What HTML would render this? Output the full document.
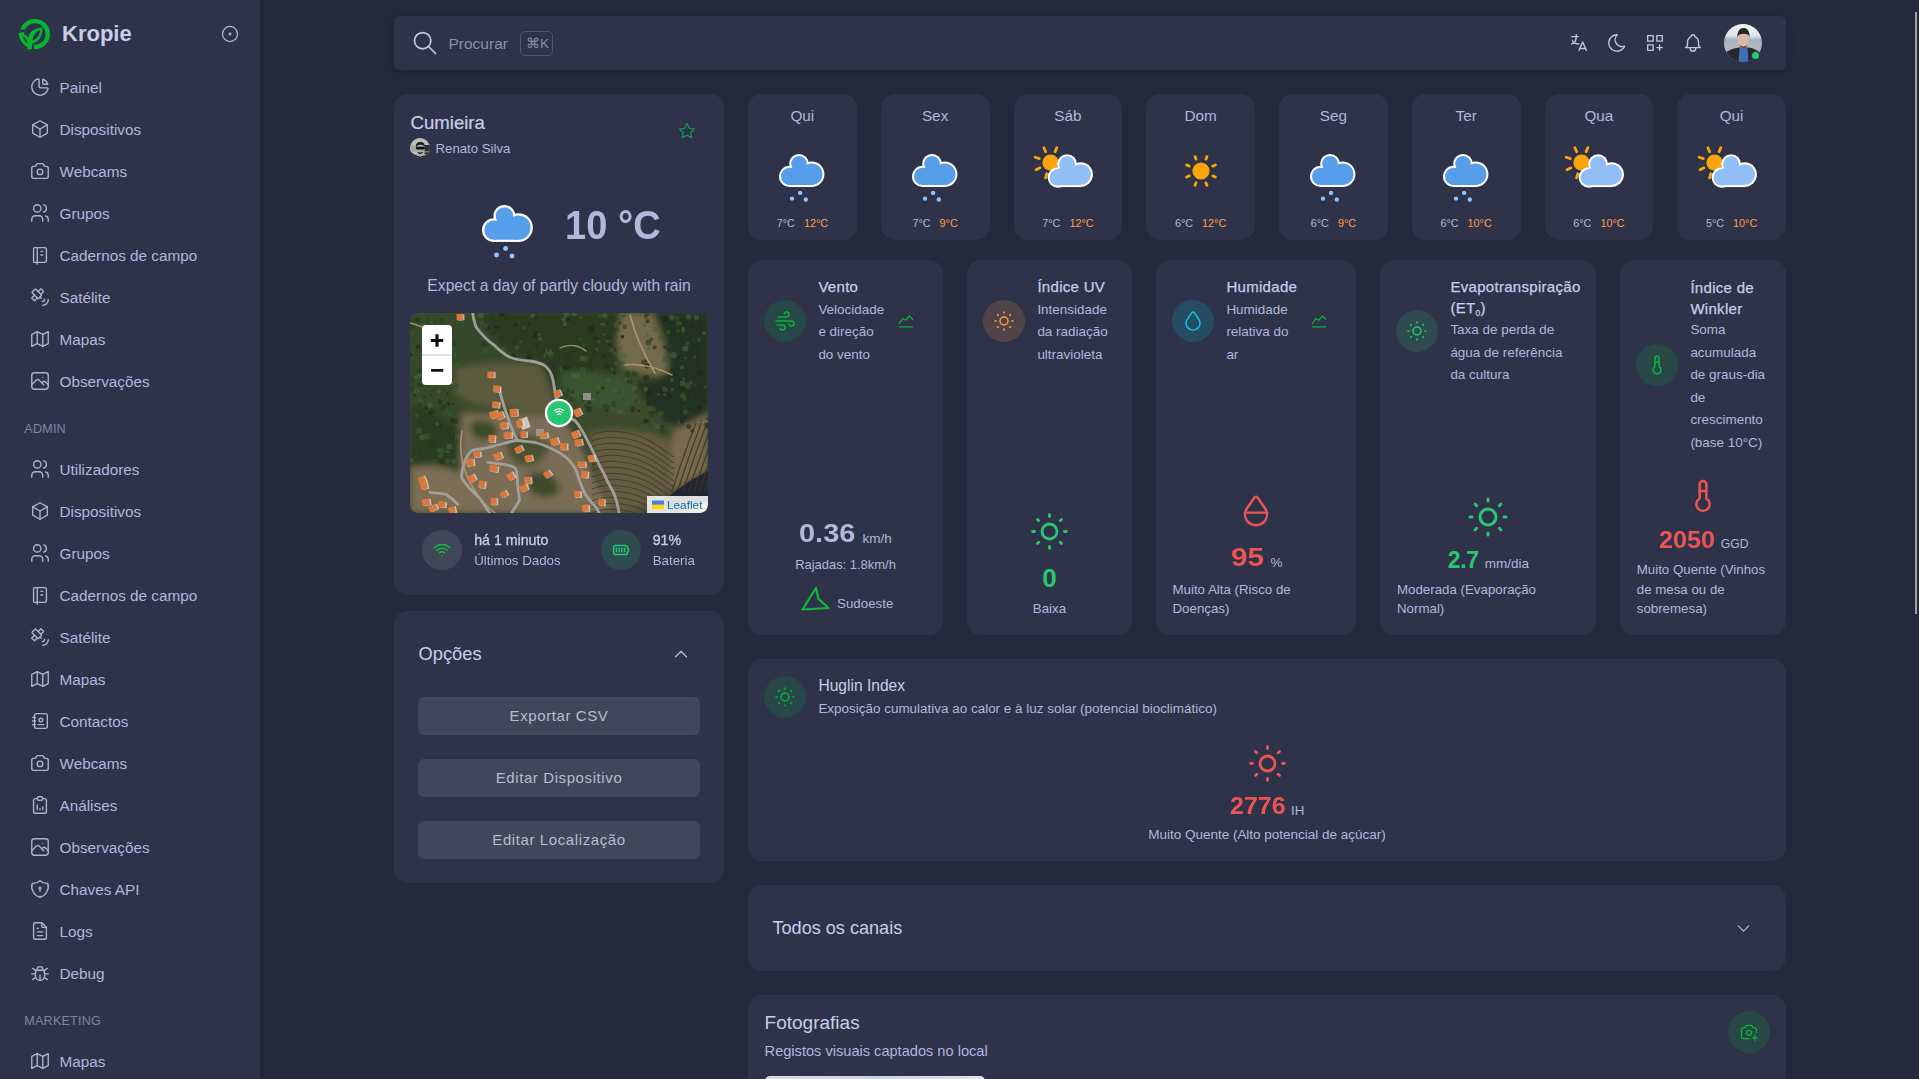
<!DOCTYPE html>
<html><head><meta charset="utf-8"><title>Kropie</title>
<style>
html,body{margin:0;padding:0;width:1919px;height:1079px;overflow:hidden;background:#25293c;font-family:"Liberation Sans",sans-serif;}
.t{position:absolute;line-height:1;white-space:nowrap;}
.b{position:absolute;}
.ic{position:absolute;overflow:visible;}
</style></head><body>
<div class="b" style="left:0;top:0;width:260px;height:1079px;background:#2f3349;box-shadow:0 0 8px rgba(15,20,34,.35)"></div>
<svg class="ic" style="left:0px;top:0px;width:60px;height:60px" viewBox="0 0 60 60">
<circle cx="34.9" cy="34" r="12.9" fill="none" stroke="#05b531" stroke-width="4.4"/>
<rect x="18" y="29.6" width="8" height="2.8" fill="#2f3349"/>
<rect x="31.8" y="44" width="2" height="8" fill="#2f3349"/>
<path d="M18.5 33.2 C24.5 33.2 29.8 36.5 30.2 44 L30.2 49.2 L27.6 49.2 L27.6 45.8 C23 45 19 40 18.5 33.2 Z" fill="#05b531"/>
<path d="M22.8 36.2 C25.5 37.5 27 39.8 27.4 43.2 C25 42 23.4 39.6 22.8 36.2 Z" fill="#2f3349"/>
<path d="M27.8 49.2 L27.8 42 C27.8 32.5 33.5 28 42.5 27.6 C42.8 37.5 37.5 42.8 32 43.8 L32 49.2 Z" fill="#05b531"/>
<path d="M32.3 40.6 C33.6 34.6 36.2 31.6 40.2 30.2 C39.4 35.6 36.8 39 32.3 40.6 Z" fill="#2f3349"/>
</svg>
<div class="t" style="left:62.00px;top:23.18px;font-size:22px;color:#c9cdea;font-weight:700;">Kropie</div>
<svg class="ic" style="left:220px;top:24px;width:20px;height:20px" viewBox="0 0 24 24" fill="none" stroke="#aeb2cc" stroke-width="1.5" stroke-linecap="round" stroke-linejoin="round" ><path d="M12 12m-9 0a9 9 0 1 0 18 0a9 9 0 1 0 -18 0"/><path d="M12 12m-1 0a1 1 0 1 0 2 0a1 1 0 1 0 -2 0"/></svg>
<svg class="ic" style="left:29px;top:75.6px;width:22px;height:22px" viewBox="0 0 24 24" fill="none" stroke="#aeb2cc" stroke-width="1.5" stroke-linecap="round" stroke-linejoin="round" ><path d="M10 3.2a9 9 0 1 0 10.8 10.8a1 1 0 0 0 -1 -1h-6.8a2 2 0 0 1 -2 -2v-7a.9 .9 0 0 0 -1 -.8"/><path d="M15 3.5a9 9 0 0 1 5.5 5.5h-4.5a1 1 0 0 1 -1 -1v-4.5"/></svg>
<div class="t" style="left:59.50px;top:80.15px;font-size:15.3px;color:#b0b7dc;font-weight:400;">Painel</div>
<svg class="ic" style="left:29px;top:117.6px;width:22px;height:22px" viewBox="0 0 24 24" fill="none" stroke="#aeb2cc" stroke-width="1.5" stroke-linecap="round" stroke-linejoin="round" ><path d="M12 3l8 4.5l0 9l-8 4.5l-8 -4.5l0 -9l8 -4.5"/><path d="M12 12l8 -4.5"/><path d="M12 12l0 9"/><path d="M12 12l-8 -4.5"/></svg>
<div class="t" style="left:59.50px;top:122.15px;font-size:15.3px;color:#b0b7dc;font-weight:400;">Dispositivos</div>
<svg class="ic" style="left:29px;top:159.6px;width:22px;height:22px" viewBox="0 0 24 24" fill="none" stroke="#aeb2cc" stroke-width="1.5" stroke-linecap="round" stroke-linejoin="round" ><path d="M5 7h1a2 2 0 0 0 2 -2a1 1 0 0 1 1 -1h6a1 1 0 0 1 1 1a2 2 0 0 0 2 2h1a2 2 0 0 1 2 2v9a2 2 0 0 1 -2 2h-14a2 2 0 0 1 -2 -2v-9a2 2 0 0 1 2 -2"/><path d="M9 13a3 3 0 1 0 6 0a3 3 0 0 0 -6 0"/></svg>
<div class="t" style="left:59.50px;top:164.15px;font-size:15.3px;color:#b0b7dc;font-weight:400;">Webcams</div>
<svg class="ic" style="left:29px;top:201.6px;width:22px;height:22px" viewBox="0 0 24 24" fill="none" stroke="#aeb2cc" stroke-width="1.5" stroke-linecap="round" stroke-linejoin="round" ><path d="M9 7m-4 0a4 4 0 1 0 8 0a4 4 0 1 0 -8 0"/><path d="M3 21v-2a4 4 0 0 1 4 -4h4a4 4 0 0 1 4 4v2"/><path d="M16 3.13a4 4 0 0 1 0 7.75"/><path d="M21 21v-2a4 4 0 0 0 -3 -3.85"/></svg>
<div class="t" style="left:59.50px;top:206.15px;font-size:15.3px;color:#b0b7dc;font-weight:400;">Grupos</div>
<svg class="ic" style="left:29px;top:243.60000000000002px;width:22px;height:22px" viewBox="0 0 24 24" fill="none" stroke="#aeb2cc" stroke-width="1.5" stroke-linecap="round" stroke-linejoin="round" ><path d="M6 4h11a2 2 0 0 1 2 2v12a2 2 0 0 1 -2 2h-11a1 1 0 0 1 -1 -1v-14a1 1 0 0 1 1 -1m3 0v18"/><path d="M13 8l2 0"/><path d="M13 12l2 0"/></svg>
<div class="t" style="left:59.50px;top:248.15px;font-size:15.3px;color:#b0b7dc;font-weight:400;">Cadernos de campo</div>
<svg class="ic" style="left:29px;top:285.6px;width:22px;height:22px" viewBox="0 0 24 24" fill="none" stroke="#aeb2cc" stroke-width="1.5" stroke-linecap="round" stroke-linejoin="round" ><path d="M3.707 6.293l2.586 -2.586a1 1 0 0 1 1.414 0l5.586 5.586a1 1 0 0 1 0 1.414l-2.586 2.586a1 1 0 0 1 -1.414 0l-5.586 -5.586a1 1 0 0 1 0 -1.414z"/><path d="M6 10l-3 3l3 3l3 -3"/><path d="M10 6l3 -3l3 3l-3 3"/><path d="M12 12l1.5 1.5"/><path d="M14.5 17a2.5 2.5 0 0 0 2.5 -2.5"/><path d="M15 21a6 6 0 0 0 6 -6"/></svg>
<div class="t" style="left:59.50px;top:290.15px;font-size:15.3px;color:#b0b7dc;font-weight:400;">Satélite</div>
<svg class="ic" style="left:29px;top:327.6px;width:22px;height:22px" viewBox="0 0 24 24" fill="none" stroke="#aeb2cc" stroke-width="1.5" stroke-linecap="round" stroke-linejoin="round" ><path d="M3 7l6 -3l6 3l6 -3v13l-6 3l-6 -3l-6 3v-13"/><path d="M9 4v13"/><path d="M15 7v13"/></svg>
<div class="t" style="left:59.50px;top:332.15px;font-size:15.3px;color:#b0b7dc;font-weight:400;">Mapas</div>
<svg class="ic" style="left:29px;top:369.6px;width:22px;height:22px" viewBox="0 0 24 24" fill="none" stroke="#aeb2cc" stroke-width="1.5" stroke-linecap="round" stroke-linejoin="round" ><path d="M15 8h.01"/><path d="M3 6a3 3 0 0 1 3 -3h12a3 3 0 0 1 3 3v12a3 3 0 0 1 -3 3h-12a3 3 0 0 1 -3 -3v-12z"/><path d="M3 16l5 -5c.928 -.893 2.072 -.893 3 0l5 5"/><path d="M14 14l1 -1c.928 -.893 2.072 -.893 3 0l3 3"/></svg>
<div class="t" style="left:59.50px;top:374.15px;font-size:15.3px;color:#b0b7dc;font-weight:400;">Observações</div>
<div class="t" style="left:24.30px;top:422.73px;font-size:12.6px;color:#7f84a3;font-weight:400;letter-spacing:.2px">ADMIN</div>
<svg class="ic" style="left:29px;top:458.1px;width:22px;height:22px" viewBox="0 0 24 24" fill="none" stroke="#aeb2cc" stroke-width="1.5" stroke-linecap="round" stroke-linejoin="round" ><path d="M9 7m-4 0a4 4 0 1 0 8 0a4 4 0 1 0 -8 0"/><path d="M3 21v-2a4 4 0 0 1 4 -4h4a4 4 0 0 1 4 4v2"/><path d="M16 3.13a4 4 0 0 1 0 7.75"/><path d="M21 21v-2a4 4 0 0 0 -3 -3.85"/></svg>
<div class="t" style="left:59.50px;top:461.65px;font-size:15.3px;color:#b0b7dc;font-weight:400;">Utilizadores</div>
<svg class="ic" style="left:29px;top:500.1px;width:22px;height:22px" viewBox="0 0 24 24" fill="none" stroke="#aeb2cc" stroke-width="1.5" stroke-linecap="round" stroke-linejoin="round" ><path d="M12 3l8 4.5l0 9l-8 4.5l-8 -4.5l0 -9l8 -4.5"/><path d="M12 12l8 -4.5"/><path d="M12 12l0 9"/><path d="M12 12l-8 -4.5"/></svg>
<div class="t" style="left:59.50px;top:503.65px;font-size:15.3px;color:#b0b7dc;font-weight:400;">Dispositivos</div>
<svg class="ic" style="left:29px;top:542.1px;width:22px;height:22px" viewBox="0 0 24 24" fill="none" stroke="#aeb2cc" stroke-width="1.5" stroke-linecap="round" stroke-linejoin="round" ><path d="M9 7m-4 0a4 4 0 1 0 8 0a4 4 0 1 0 -8 0"/><path d="M3 21v-2a4 4 0 0 1 4 -4h4a4 4 0 0 1 4 4v2"/><path d="M16 3.13a4 4 0 0 1 0 7.75"/><path d="M21 21v-2a4 4 0 0 0 -3 -3.85"/></svg>
<div class="t" style="left:59.50px;top:545.65px;font-size:15.3px;color:#b0b7dc;font-weight:400;">Grupos</div>
<svg class="ic" style="left:29px;top:584.1px;width:22px;height:22px" viewBox="0 0 24 24" fill="none" stroke="#aeb2cc" stroke-width="1.5" stroke-linecap="round" stroke-linejoin="round" ><path d="M6 4h11a2 2 0 0 1 2 2v12a2 2 0 0 1 -2 2h-11a1 1 0 0 1 -1 -1v-14a1 1 0 0 1 1 -1m3 0v18"/><path d="M13 8l2 0"/><path d="M13 12l2 0"/></svg>
<div class="t" style="left:59.50px;top:587.65px;font-size:15.3px;color:#b0b7dc;font-weight:400;">Cadernos de campo</div>
<svg class="ic" style="left:29px;top:626.1px;width:22px;height:22px" viewBox="0 0 24 24" fill="none" stroke="#aeb2cc" stroke-width="1.5" stroke-linecap="round" stroke-linejoin="round" ><path d="M3.707 6.293l2.586 -2.586a1 1 0 0 1 1.414 0l5.586 5.586a1 1 0 0 1 0 1.414l-2.586 2.586a1 1 0 0 1 -1.414 0l-5.586 -5.586a1 1 0 0 1 0 -1.414z"/><path d="M6 10l-3 3l3 3l3 -3"/><path d="M10 6l3 -3l3 3l-3 3"/><path d="M12 12l1.5 1.5"/><path d="M14.5 17a2.5 2.5 0 0 0 2.5 -2.5"/><path d="M15 21a6 6 0 0 0 6 -6"/></svg>
<div class="t" style="left:59.50px;top:629.65px;font-size:15.3px;color:#b0b7dc;font-weight:400;">Satélite</div>
<svg class="ic" style="left:29px;top:668.1px;width:22px;height:22px" viewBox="0 0 24 24" fill="none" stroke="#aeb2cc" stroke-width="1.5" stroke-linecap="round" stroke-linejoin="round" ><path d="M3 7l6 -3l6 3l6 -3v13l-6 3l-6 -3l-6 3v-13"/><path d="M9 4v13"/><path d="M15 7v13"/></svg>
<div class="t" style="left:59.50px;top:671.65px;font-size:15.3px;color:#b0b7dc;font-weight:400;">Mapas</div>
<svg class="ic" style="left:29px;top:710.1px;width:22px;height:22px" viewBox="0 0 24 24" fill="none" stroke="#aeb2cc" stroke-width="1.5" stroke-linecap="round" stroke-linejoin="round" ><path d="M20 6v12a2 2 0 0 1 -2 2h-10a2 2 0 0 1 -2 -2v-12a2 2 0 0 1 2 -2h10a2 2 0 0 1 2 2z"/><path d="M10 16h6"/><path d="M13 11m-2 0a2 2 0 1 0 4 0a2 2 0 1 0 -4 0"/><path d="M4 8h3"/><path d="M4 12h3"/><path d="M4 16h3"/></svg>
<div class="t" style="left:59.50px;top:713.65px;font-size:15.3px;color:#b0b7dc;font-weight:400;">Contactos</div>
<svg class="ic" style="left:29px;top:752.1px;width:22px;height:22px" viewBox="0 0 24 24" fill="none" stroke="#aeb2cc" stroke-width="1.5" stroke-linecap="round" stroke-linejoin="round" ><path d="M5 7h1a2 2 0 0 0 2 -2a1 1 0 0 1 1 -1h6a1 1 0 0 1 1 1a2 2 0 0 0 2 2h1a2 2 0 0 1 2 2v9a2 2 0 0 1 -2 2h-14a2 2 0 0 1 -2 -2v-9a2 2 0 0 1 2 -2"/><path d="M9 13a3 3 0 1 0 6 0a3 3 0 0 0 -6 0"/></svg>
<div class="t" style="left:59.50px;top:755.65px;font-size:15.3px;color:#b0b7dc;font-weight:400;">Webcams</div>
<svg class="ic" style="left:29px;top:794.1px;width:22px;height:22px" viewBox="0 0 24 24" fill="none" stroke="#aeb2cc" stroke-width="1.5" stroke-linecap="round" stroke-linejoin="round" ><path d="M9 5h-2a2 2 0 0 0 -2 2v12a2 2 0 0 0 2 2h10a2 2 0 0 0 2 -2v-12a2 2 0 0 0 -2 -2h-2"/><path d="M9 3m0 2a2 2 0 0 1 2 -2h2a2 2 0 0 1 2 2v0a2 2 0 0 1 -2 2h-2a2 2 0 0 1 -2 -2z"/><path d="M9 17v-5"/><path d="M12 17v-1"/><path d="M15 17v-3"/></svg>
<div class="t" style="left:59.50px;top:797.65px;font-size:15.3px;color:#b0b7dc;font-weight:400;">Análises</div>
<svg class="ic" style="left:29px;top:836.1px;width:22px;height:22px" viewBox="0 0 24 24" fill="none" stroke="#aeb2cc" stroke-width="1.5" stroke-linecap="round" stroke-linejoin="round" ><path d="M15 8h.01"/><path d="M3 6a3 3 0 0 1 3 -3h12a3 3 0 0 1 3 3v12a3 3 0 0 1 -3 3h-12a3 3 0 0 1 -3 -3v-12z"/><path d="M3 16l5 -5c.928 -.893 2.072 -.893 3 0l5 5"/><path d="M14 14l1 -1c.928 -.893 2.072 -.893 3 0l3 3"/></svg>
<div class="t" style="left:59.50px;top:839.65px;font-size:15.3px;color:#b0b7dc;font-weight:400;">Observações</div>
<svg class="ic" style="left:29px;top:878.1px;width:22px;height:22px" viewBox="0 0 24 24" fill="none" stroke="#aeb2cc" stroke-width="1.5" stroke-linecap="round" stroke-linejoin="round" ><path d="M12 3a12 12 0 0 0 8.5 3a12 12 0 0 1 -8.5 15a12 12 0 0 1 -8.5 -15a12 12 0 0 0 8.5 -3"/><path d="M12 11m-1 0a1 1 0 1 0 2 0a1 1 0 1 0 -2 0"/><path d="M12 12l0 2.5"/></svg>
<div class="t" style="left:59.50px;top:881.65px;font-size:15.3px;color:#b0b7dc;font-weight:400;">Chaves API</div>
<svg class="ic" style="left:29px;top:920.1px;width:22px;height:22px" viewBox="0 0 24 24" fill="none" stroke="#aeb2cc" stroke-width="1.5" stroke-linecap="round" stroke-linejoin="round" ><path d="M14 3v4a1 1 0 0 0 1 1h4"/><path d="M17 21h-10a2 2 0 0 1 -2 -2v-14a2 2 0 0 1 2 -2h7l5 5v11a2 2 0 0 1 -2 2z"/><path d="M9 9l1 0"/><path d="M9 13l6 0"/><path d="M9 17l6 0"/></svg>
<div class="t" style="left:59.50px;top:923.65px;font-size:15.3px;color:#b0b7dc;font-weight:400;">Logs</div>
<svg class="ic" style="left:29px;top:962.1px;width:22px;height:22px" viewBox="0 0 24 24" fill="none" stroke="#aeb2cc" stroke-width="1.5" stroke-linecap="round" stroke-linejoin="round" ><path d="M9 9v-1a3 3 0 0 1 6 0v1"/><path d="M8 9h8a6 6 0 0 1 1 3v3a5 5 0 0 1 -10 0v-3a6 6 0 0 1 1 -3"/><path d="M3 13l4 0"/><path d="M17 13l4 0"/><path d="M12 20l0 -6"/><path d="M4 19l3.35 -2"/><path d="M20 19l-3.35 -2"/><path d="M4 7l3.75 2.4"/><path d="M20 7l-3.75 2.4"/></svg>
<div class="t" style="left:59.50px;top:965.65px;font-size:15.3px;color:#b0b7dc;font-weight:400;">Debug</div>
<div class="t" style="left:24.30px;top:1014.93px;font-size:12.6px;color:#7f84a3;font-weight:400;letter-spacing:.2px">MARKETING</div>
<svg class="ic" style="left:29px;top:1050.4px;width:22px;height:22px" viewBox="0 0 24 24" fill="none" stroke="#aeb2cc" stroke-width="1.5" stroke-linecap="round" stroke-linejoin="round" ><path d="M3 7l6 -3l6 3l6 -3v13l-6 3l-6 -3l-6 3v-13"/><path d="M9 4v13"/><path d="M15 7v13"/></svg>
<div class="t" style="left:59.50px;top:1053.95px;font-size:15.3px;color:#b0b7dc;font-weight:400;">Mapas</div>
<div class="b" style="left:394px;top:16px;width:1392px;height:54px;background:#2f3349;border-radius:6px;box-shadow:0 2px 10px rgba(15,20,34,.35)"></div>
<svg class="ic" style="left:411px;top:29px;width:28px;height:28px" viewBox="0 0 24 24" fill="none" stroke="#c3c6dd" stroke-width="1.5" stroke-linecap="round" stroke-linejoin="round" ><path d="M10 10m-7 0a7 7 0 1 0 14 0a7 7 0 1 0 -14 0"/><path d="M21 21l-6 -6"/></svg>
<div class="t" style="left:448.50px;top:35.98px;font-size:15.5px;color:#8b8fa8;font-weight:400;">Procurar</div>
<div class="b" style="left:520px;top:31px;width:31px;height:23px;border:1px solid #4f5470;border-radius:5px"></div>
<div class="t" style="left:526.00px;top:37.07px;font-size:13.5px;color:#8b8fa8;font-weight:400;">&#8984;K</div>
<svg class="ic" style="left:1568px;top:32px;width:22px;height:22px" viewBox="0 0 24 24" fill="none" stroke="#c3c6dd" stroke-width="1.5" stroke-linecap="round" stroke-linejoin="round" ><path d="M4 5h7"/><path d="M9 3v2c0 4.418 -2.239 8 -5 8"/><path d="M5 9c0 2.144 2.952 3.908 6.7 4"/><path d="M12 20l4 -9l4 9"/><path d="M19.1 18h-6.2"/></svg>
<svg class="ic" style="left:1605.5px;top:32px;width:22px;height:22px" viewBox="0 0 24 24" fill="none" stroke="#c3c6dd" stroke-width="1.5" stroke-linecap="round" stroke-linejoin="round" ><path d="M12 3c.132 0 .263 0 .393 0a7.5 7.5 0 0 0 7.92 12.446a9 9 0 1 1 -8.313 -12.454z"/></svg>
<svg class="ic" style="left:1644px;top:32px;width:22px;height:22px" viewBox="0 0 24 24" fill="none" stroke="#c3c6dd" stroke-width="1.5" stroke-linecap="round" stroke-linejoin="round" ><path d="M4 4h6v6h-6z"/><path d="M14 4h6v6h-6z"/><path d="M4 14h6v6h-6z"/><path d="M14 17h6m-3 -3v6"/></svg>
<svg class="ic" style="left:1682px;top:32px;width:22px;height:22px" viewBox="0 0 24 24" fill="none" stroke="#c3c6dd" stroke-width="1.5" stroke-linecap="round" stroke-linejoin="round" ><path d="M10 5a2 2 0 1 1 4 0a7 7 0 0 1 4 6v3a4 4 0 0 0 2 3h-16a4 4 0 0 0 2 -3v-3a7 7 0 0 1 4 -6"/><path d="M9 17v1a3 3 0 0 0 6 0v-1"/></svg>
<svg class="ic" style="left:1724px;top:24px;width:38px;height:38px" viewBox="0 0 38 38">
<defs><clipPath id="av"><circle cx="19" cy="19" r="19"/></clipPath>
<linearGradient id="sky" x1="0" y1="0" x2="0" y2="1"><stop offset="0" stop-color="#eef2f4"/><stop offset=".3" stop-color="#dfe6ea"/><stop offset=".42" stop-color="#9fb3c2"/><stop offset=".6" stop-color="#b4b9bd"/><stop offset="1" stop-color="#9a9ea2"/></linearGradient></defs>
<g clip-path="url(#av)">
<rect width="38" height="38" fill="url(#sky)"/>
<path d="M0 30 C5 26 9 24 15 23.5 L24 23.5 C30 24 34 27 38 31 V38 H0 Z" fill="#25292d"/>
<path d="M14.5 38 L15.5 24 L23.5 24 L24.5 38 Z" fill="#3f70b4"/>
<ellipse cx="19.3" cy="16" rx="5.6" ry="7.2" fill="#d9b9a6"/>
<path d="M15 20 C16 23 18 23.5 19.5 23.5 C21 23.5 23 23 24 20 C23 22 21 22.5 19.5 22.5 C18 22.5 16 22 15 20 Z" fill="#3a2a24"/>
<path d="M13.4 13.5 C13 7 16 4 19.5 4 C23 4 25.8 6.5 25.6 13.5 C24.5 10.5 22.5 9.8 19.5 9.8 C16.5 9.8 14.5 10.5 13.4 13.5 Z" fill="#2e2420"/>
</g></svg>
<div class="b" style="left:1751.5px;top:51.5px;width:7px;height:7px;border-radius:50%;background:#28c76f;box-shadow:0 0 0 1.5px #2f3349"></div>
<div class="b" style="left:394px;top:94px;width:330px;height:501px;background:#2f3349;border-radius:14px;"></div>
<div class="t" style="left:410.50px;top:113.76px;font-size:18.6px;color:#c9cdea;font-weight:400;-webkit-text-stroke:.2px">Cumieira</div>
<svg class="ic" style="left:410px;top:138px;width:20px;height:20px" viewBox="0 0 20 20">
<defs><clipPath id="av2"><circle cx="10" cy="10" r="10"/></clipPath></defs>
<g clip-path="url(#av2)"><rect width="20" height="20" fill="#bdbdbd"/>
<rect x="0" y="7.5" width="6" height="6" fill="#a8a8a8"/>
<rect x="14.5" y="7" width="6" height="9.5" fill="#2e2e2e"/><rect x="14.5" y="13" width="6" height="1.5" fill="#777"/>
<path d="M0 20 L0 13 C3 16 6 17.5 10 18.5 C13 18 15 17 20 15.5 V20 Z" fill="#262626"/>
<ellipse cx="10.3" cy="12" rx="4.2" ry="6.4" fill="#a9a9a9"/>
<path d="M6 9.5 C5.5 5.5 7.5 4 10.5 4 C13.5 4 15 5.5 14.5 9 C13.5 7 12 6.8 10.3 6.8 C8.5 6.8 7 7.2 6 9.5 Z" fill="#1c1c1c"/>
<rect x="6" y="8.8" width="8.8" height="2.6" rx="1" fill="#141414"/>
<path d="M8 14.5 C9 15.8 11.5 15.8 12.5 14.5 C11.5 15 9 15 8 14.5 Z" fill="#222" stroke="#222" stroke-width=".8"/>
</g></svg>
<div class="t" style="left:435.60px;top:141.63px;font-size:13.2px;color:#b0b7dc;font-weight:400;">Renato Silva</div>
<svg class="ic" style="left:677.5px;top:122px;width:18px;height:18px" viewBox="0 0 24 24" fill="none" stroke="#10a34a" stroke-width="1.4" stroke-linecap="round" stroke-linejoin="round" ><path d="M12 17.75l-6.172 3.245l1.179 -6.873l-5 -4.867l6.9 -1l3.086 -6.253l3.086 6.253l6.9 1l-5 4.867l1.179 6.873z"/></svg>
<svg class="ic" style="left:482px;top:204.8px;width:51.52px;height:52.64000000000001px" viewBox="0 0 46 47">
<g fill="#ffffff"><circle cx="20" cy="9.8" r="9.8"/><circle cx="10.6" cy="22.4" r="10.6"/><circle cx="32.6" cy="20.2" r="12.8"/><rect x="10.6" y="14" width="22" height="19"/></g>
<g fill="#569ee9"><circle cx="20" cy="9.8" r="7.8"/><circle cx="10.6" cy="22.4" r="8.6"/><circle cx="32.6" cy="20.2" r="10.8"/><rect x="10.6" y="14" width="22" height="17"/></g>
<g fill="#8ec2ff"><circle cx="21.1" cy="38.9" r="2.2"/><circle cx="13" cy="44.6" r="2.2"/><circle cx="26.8" cy="45.5" r="2.2"/></g>
</svg>
<div class="t" style="left:565.20px;top:204.62px;font-size:40.5px;color:#b3b8d9;font-weight:700;transform:scaleX(.94);transform-origin:0 0">10 &deg;C</div>
<div class="t" style="left:359.00px;width:400px;text-align:center;top:277.51px;font-size:15.7px;color:#b0b7dc;font-weight:400;">Expect a day of partly cloudy with rain</div>
<svg class="ic" style="left:410px;top:313px;width:298px;height:200px;overflow:hidden;border-radius:8px" viewBox="0 0 298 200"><defs><clipPath id="mclip"><rect width="298" height="200" rx="8"/></clipPath><filter id="blur1" x="-10%" y="-10%" width="120%" height="120%"><feGaussianBlur stdDeviation="3"/></filter><filter id="blur2"><feGaussianBlur stdDeviation="0.7"/></filter></defs><g clip-path="url(#mclip)"><rect width="298" height="200" fill="#3c4a2c"/><g filter="url(#blur1)"><path d="M0 0 H70 C75 20 90 35 100 45 C80 55 60 70 50 100 C45 120 50 140 52 160 H0 Z" fill="#34482a"/><path d="M0 90 C20 95 40 110 52 120 L52 160 C35 150 15 150 0 155 Z" fill="#2b3d22"/><path d="M45 55 C70 50 100 48 130 52 C140 70 145 90 150 100 C130 105 110 100 95 95 C75 95 55 90 45 80 Z" fill="#5b5a3c"/><path d="M70 0 H215 C208 20 206 40 212 56 C190 70 170 85 150 100 C145 80 140 60 132 50 C115 46 100 42 88 30 C78 20 72 10 70 0 Z" fill="#2a3b20"/><path d="M150 60 C175 55 200 60 220 70 C230 80 228 95 215 100 C195 95 170 90 150 85 Z" fill="#3b5430"/><path d="M212 0 H242 C250 15 256 35 258 62 C245 64 228 60 214 56 C205 42 206 20 212 0 Z" fill="#736a4c"/><path d="M242 0 H298 V125 C285 120 270 115 258 110 C245 100 230 85 228 70 C245 66 258 64 260 50 C258 30 250 12 242 0 Z" fill="#233320"/><path d="M52 100 C80 100 120 102 150 105 C165 120 175 140 185 165 C192 180 198 190 205 200 H50 C48 170 50 130 52 100 Z" fill="#7a6c55"/><path d="M0 155 C20 150 40 152 55 165 C60 180 62 190 64 200 H0 Z" fill="#7b6d52"/><path d="M95 125 C110 120 130 122 140 132 C135 150 120 158 105 150 C98 142 95 135 95 125 Z" fill="#4a5232"/><path d="M60 110 C70 105 85 108 88 118 C85 128 70 130 62 122 Z" fill="#3a4a2a"/><path d="M120 160 C135 155 148 165 150 178 C140 188 125 185 118 175 Z" fill="#3d4a2b"/><path d="M178 120 C205 112 240 118 262 128 C270 145 268 165 262 178 C245 190 230 200 215 200 H200 C192 175 186 145 178 120 Z" fill="#655a42"/><path d="M262 118 C275 112 290 105 298 100 V158 C285 165 272 172 262 178 Z" fill="#7a6b4e"/><path d="M272 200 C282 194 292 190 298 186 V200 Z" fill="#cfc9bb"/></g><g filter="url(#blur2)"><circle cx="275.4" cy="93.1" r="2.9" fill="#2a3a20" opacity=".6"/><circle cx="42.3" cy="107.7" r="2.4" fill="#1c2a16" opacity=".6"/><circle cx="18.8" cy="7.1" r="2.4" fill="#26361c" opacity=".6"/><circle cx="176.1" cy="39.1" r="2.5" fill="#26361c" opacity=".6"/><circle cx="86.1" cy="14.0" r="2.0" fill="#1c2a16" opacity=".6"/><circle cx="252.3" cy="77.3" r="2.9" fill="#1c2a16" opacity=".6"/><circle cx="0.2" cy="41.9" r="2.1" fill="#1c2a16" opacity=".6"/><circle cx="292.1" cy="79.5" r="2.3" fill="#1c2a16" opacity=".6"/><circle cx="4.5" cy="82.0" r="1.5" fill="#1c2a16" opacity=".6"/><circle cx="210.7" cy="2.2" r="2.8" fill="#46663a" opacity=".6"/><circle cx="133.3" cy="38.1" r="2.0" fill="#26361c" opacity=".6"/><circle cx="295.0" cy="0.1" r="1.8" fill="#2a3a20" opacity=".6"/><circle cx="263.7" cy="42.1" r="3.2" fill="#46663a" opacity=".6"/><circle cx="12.5" cy="29.3" r="1.7" fill="#46663a" opacity=".6"/><circle cx="88.3" cy="14.7" r="1.6" fill="#1c2a16" opacity=".6"/><circle cx="189.7" cy="3.1" r="1.9" fill="#3d5a2c" opacity=".6"/><circle cx="258.2" cy="36.6" r="1.8" fill="#26361c" opacity=".6"/><circle cx="204.7" cy="77.6" r="2.4" fill="#46663a" opacity=".6"/><circle cx="125.6" cy="20.8" r="2.2" fill="#1c2a16" opacity=".6"/><circle cx="269.6" cy="98.2" r="1.6" fill="#2a3a20" opacity=".6"/><circle cx="214.7" cy="13.8" r="2.2" fill="#26361c" opacity=".6"/><circle cx="22.1" cy="42.5" r="2.7" fill="#26361c" opacity=".6"/><circle cx="20.6" cy="82.3" r="1.3" fill="#26361c" opacity=".6"/><circle cx="170.5" cy="26.3" r="1.5" fill="#3d5a2c" opacity=".6"/><circle cx="282.2" cy="118.0" r="2.1" fill="#1c2a16" opacity=".6"/><circle cx="10.0" cy="119.7" r="2.2" fill="#1c2a16" opacity=".6"/><circle cx="217.7" cy="63.8" r="1.4" fill="#1c2a16" opacity=".6"/><circle cx="272.7" cy="70.4" r="3.0" fill="#46663a" opacity=".6"/><circle cx="259.6" cy="83.4" r="2.9" fill="#1c2a16" opacity=".6"/><circle cx="181.4" cy="16.0" r="3.2" fill="#1c2a16" opacity=".6"/><circle cx="173.1" cy="88.1" r="1.4" fill="#2a3a20" opacity=".6"/><circle cx="179.2" cy="96.2" r="3.1" fill="#26361c" opacity=".6"/><circle cx="196.7" cy="97.3" r="1.9" fill="#1c2a16" opacity=".6"/><circle cx="42.7" cy="122.4" r="1.5" fill="#2a3a20" opacity=".6"/><circle cx="262.3" cy="76.9" r="3.0" fill="#2a3a20" opacity=".6"/><circle cx="12.1" cy="12.8" r="2.8" fill="#3d5a2c" opacity=".6"/><circle cx="33.6" cy="94.3" r="2.9" fill="#26361c" opacity=".6"/><circle cx="202.1" cy="56.2" r="1.8" fill="#3d5a2c" opacity=".6"/><circle cx="235.9" cy="3.8" r="2.0" fill="#26361c" opacity=".6"/><circle cx="34.4" cy="21.8" r="2.5" fill="#2a3a20" opacity=".6"/><circle cx="204.0" cy="39.9" r="1.7" fill="#46663a" opacity=".6"/><circle cx="159.4" cy="7.2" r="1.7" fill="#26361c" opacity=".6"/><circle cx="225.3" cy="78.7" r="1.4" fill="#26361c" opacity=".6"/><circle cx="38.7" cy="90.7" r="2.0" fill="#1c2a16" opacity=".6"/><circle cx="213.9" cy="42.7" r="3.2" fill="#46663a" opacity=".6"/><circle cx="291.3" cy="107.4" r="1.7" fill="#3d5a2c" opacity=".6"/><circle cx="214.0" cy="3.1" r="1.4" fill="#2a3a20" opacity=".6"/><circle cx="228.9" cy="97.5" r="1.6" fill="#1c2a16" opacity=".6"/><circle cx="258.5" cy="85.8" r="1.5" fill="#1c2a16" opacity=".6"/><circle cx="41.9" cy="29.7" r="3.0" fill="#2a3a20" opacity=".6"/><circle cx="225.8" cy="87.9" r="1.8" fill="#2a3a20" opacity=".6"/><circle cx="166.9" cy="62.3" r="3.1" fill="#46663a" opacity=".6"/><circle cx="90.7" cy="28.2" r="2.2" fill="#2a3a20" opacity=".6"/><circle cx="170.8" cy="40.2" r="1.4" fill="#2a3a20" opacity=".6"/><circle cx="1.5" cy="75.4" r="3.1" fill="#2a3a20" opacity=".6"/><circle cx="153.8" cy="80.1" r="1.4" fill="#2a3a20" opacity=".6"/><circle cx="27.8" cy="33.4" r="2.1" fill="#2a3a20" opacity=".6"/><circle cx="274.2" cy="105.0" r="1.6" fill="#1c2a16" opacity=".6"/><circle cx="6.8" cy="38.8" r="1.2" fill="#26361c" opacity=".6"/><circle cx="261.9" cy="4.7" r="2.9" fill="#46663a" opacity=".6"/><circle cx="257.4" cy="106.8" r="2.3" fill="#26361c" opacity=".6"/><circle cx="255.3" cy="46.5" r="3.0" fill="#3d5a2c" opacity=".6"/><circle cx="275.0" cy="43.6" r="3.0" fill="#26361c" opacity=".6"/><circle cx="39.9" cy="47.9" r="1.7" fill="#1c2a16" opacity=".6"/><circle cx="37.5" cy="80.6" r="1.4" fill="#1c2a16" opacity=".6"/><circle cx="169.8" cy="71.5" r="1.4" fill="#3d5a2c" opacity=".6"/><circle cx="31.6" cy="7.5" r="2.4" fill="#2a3a20" opacity=".6"/><circle cx="269.7" cy="96.3" r="1.6" fill="#26361c" opacity=".6"/><circle cx="28.4" cy="12.4" r="1.4" fill="#46663a" opacity=".6"/><circle cx="28.8" cy="78.2" r="2.2" fill="#46663a" opacity=".6"/><circle cx="3.9" cy="140.2" r="1.6" fill="#26361c" opacity=".6"/><circle cx="120.8" cy="39.0" r="1.4" fill="#26361c" opacity=".6"/><circle cx="236.1" cy="64.7" r="2.8" fill="#1c2a16" opacity=".6"/><circle cx="187.6" cy="80.9" r="1.6" fill="#2a3a20" opacity=".6"/><circle cx="174.2" cy="68.2" r="1.8" fill="#3d5a2c" opacity=".6"/><circle cx="34.6" cy="148.6" r="2.8" fill="#26361c" opacity=".6"/><circle cx="21.0" cy="68.3" r="1.4" fill="#46663a" opacity=".6"/><circle cx="269.0" cy="9.9" r="3.1" fill="#3d5a2c" opacity=".6"/><circle cx="198.5" cy="67.6" r="2.3" fill="#46663a" opacity=".6"/><circle cx="158.9" cy="77.9" r="2.5" fill="#46663a" opacity=".6"/><circle cx="292.1" cy="4.6" r="1.4" fill="#2a3a20" opacity=".6"/><circle cx="193.1" cy="2.2" r="1.7" fill="#3d5a2c" opacity=".6"/><circle cx="269.9" cy="110.0" r="2.0" fill="#2a3a20" opacity=".6"/><circle cx="29.7" cy="88.9" r="2.3" fill="#1c2a16" opacity=".6"/><circle cx="255.0" cy="108.4" r="1.3" fill="#2a3a20" opacity=".6"/><circle cx="281.7" cy="84.1" r="2.0" fill="#2a3a20" opacity=".6"/><circle cx="188.6" cy="81.8" r="1.3" fill="#46663a" opacity=".6"/><circle cx="13.5" cy="19.7" r="1.5" fill="#46663a" opacity=".6"/><circle cx="286.1" cy="49.0" r="1.3" fill="#1c2a16" opacity=".6"/><circle cx="124.3" cy="23.6" r="1.9" fill="#1c2a16" opacity=".6"/><circle cx="46.1" cy="72.7" r="2.5" fill="#26361c" opacity=".6"/><circle cx="173.5" cy="83.9" r="2.8" fill="#2a3a20" opacity=".6"/><circle cx="40.8" cy="58.0" r="1.7" fill="#26361c" opacity=".6"/><circle cx="11.8" cy="12.2" r="1.7" fill="#3d5a2c" opacity=".6"/><circle cx="8.0" cy="7.6" r="2.3" fill="#26361c" opacity=".6"/><circle cx="21.6" cy="17.3" r="2.3" fill="#26361c" opacity=".6"/><circle cx="188.1" cy="74.6" r="1.9" fill="#46663a" opacity=".6"/><circle cx="239.1" cy="89.5" r="2.9" fill="#2a3a20" opacity=".6"/><circle cx="229.1" cy="88.9" r="2.0" fill="#3d5a2c" opacity=".6"/><circle cx="44.9" cy="30.7" r="1.9" fill="#2a3a20" opacity=".6"/><circle cx="274.4" cy="85.5" r="2.4" fill="#3d5a2c" opacity=".6"/><circle cx="162.0" cy="86.4" r="2.2" fill="#2a3a20" opacity=".6"/><circle cx="204.2" cy="59.8" r="1.4" fill="#1c2a16" opacity=".6"/><circle cx="24.3" cy="60.8" r="1.8" fill="#3d5a2c" opacity=".6"/><circle cx="42.6" cy="71.6" r="1.9" fill="#3d5a2c" opacity=".6"/><circle cx="35.0" cy="141.9" r="2.4" fill="#2a3a20" opacity=".6"/><circle cx="295.7" cy="91.7" r="2.0" fill="#26361c" opacity=".6"/><circle cx="237.5" cy="108.1" r="2.3" fill="#2a3a20" opacity=".6"/><circle cx="262.5" cy="56.3" r="1.6" fill="#1c2a16" opacity=".6"/><circle cx="17.2" cy="31.7" r="3.1" fill="#3d5a2c" opacity=".6"/><circle cx="19.1" cy="109.4" r="1.4" fill="#2a3a20" opacity=".6"/><circle cx="24.3" cy="147.4" r="1.4" fill="#3d5a2c" opacity=".6"/><circle cx="189.0" cy="28.8" r="1.7" fill="#46663a" opacity=".6"/><circle cx="272.7" cy="82.1" r="2.9" fill="#3d5a2c" opacity=".6"/><circle cx="43.6" cy="148.2" r="2.6" fill="#46663a" opacity=".6"/><circle cx="157.7" cy="54.8" r="2.1" fill="#1c2a16" opacity=".6"/><circle cx="217.8" cy="60.7" r="2.8" fill="#26361c" opacity=".6"/><circle cx="271.0" cy="7.3" r="1.6" fill="#1c2a16" opacity=".6"/><circle cx="178.8" cy="94.4" r="1.6" fill="#2a3a20" opacity=".6"/><circle cx="243.5" cy="95.9" r="2.2" fill="#3d5a2c" opacity=".6"/><circle cx="119.0" cy="43.5" r="2.8" fill="#26361c" opacity=".6"/><circle cx="153.7" cy="54.9" r="2.5" fill="#1c2a16" opacity=".6"/><circle cx="70.8" cy="2.2" r="3.0" fill="#46663a" opacity=".6"/><circle cx="241.4" cy="26.2" r="1.7" fill="#2a3a20" opacity=".6"/><circle cx="159.3" cy="30.1" r="1.2" fill="#26361c" opacity=".6"/><circle cx="245.0" cy="16.5" r="2.4" fill="#3d5a2c" opacity=".6"/><circle cx="206.7" cy="16.6" r="2.3" fill="#2a3a20" opacity=".6"/><circle cx="150.8" cy="3.8" r="2.0" fill="#26361c" opacity=".6"/><circle cx="273.2" cy="18.2" r="1.6" fill="#46663a" opacity=".6"/><circle cx="22.7" cy="61.1" r="2.5" fill="#46663a" opacity=".6"/><circle cx="20.0" cy="14.9" r="1.4" fill="#26361c" opacity=".6"/><circle cx="194.9" cy="2.5" r="2.6" fill="#46663a" opacity=".6"/><circle cx="45.3" cy="125.6" r="2.7" fill="#2a3a20" opacity=".6"/><circle cx="165.6" cy="17.4" r="1.6" fill="#26361c" opacity=".6"/><circle cx="218.0" cy="65.9" r="2.3" fill="#3d5a2c" opacity=".6"/><circle cx="215.7" cy="66.3" r="1.4" fill="#46663a" opacity=".6"/><circle cx="42.0" cy="18.9" r="1.6" fill="#26361c" opacity=".6"/><circle cx="176.6" cy="18.0" r="1.3" fill="#26361c" opacity=".6"/><circle cx="294.2" cy="86.8" r="1.9" fill="#1c2a16" opacity=".6"/><circle cx="41.4" cy="41.1" r="2.8" fill="#26361c" opacity=".6"/><circle cx="122.8" cy="3.1" r="2.4" fill="#46663a" opacity=".6"/><circle cx="157.9" cy="52.1" r="1.9" fill="#26361c" opacity=".6"/><circle cx="193.9" cy="21.3" r="1.6" fill="#46663a" opacity=".6"/><circle cx="30.6" cy="142.7" r="2.7" fill="#3d5a2c" opacity=".6"/><circle cx="269.1" cy="109.7" r="2.4" fill="#3d5a2c" opacity=".6"/><circle cx="278.9" cy="113.5" r="2.5" fill="#1c2a16" opacity=".6"/><circle cx="207.7" cy="65.8" r="1.7" fill="#3d5a2c" opacity=".6"/><circle cx="263.1" cy="90.5" r="1.7" fill="#26361c" opacity=".6"/><circle cx="267.3" cy="66.9" r="1.4" fill="#26361c" opacity=".6"/><circle cx="245.7" cy="57.7" r="1.7" fill="#3d5a2c" opacity=".6"/><circle cx="22.7" cy="6.4" r="2.8" fill="#26361c" opacity=".6"/><circle cx="122.8" cy="6.6" r="2.0" fill="#2a3a20" opacity=".6"/><circle cx="169.7" cy="34.7" r="1.5" fill="#2a3a20" opacity=".6"/><circle cx="30.6" cy="69.1" r="3.0" fill="#2a3a20" opacity=".6"/><circle cx="168.3" cy="81.4" r="2.2" fill="#3d5a2c" opacity=".6"/><circle cx="254.8" cy="81.8" r="1.4" fill="#46663a" opacity=".6"/><circle cx="125.3" cy="4.8" r="1.8" fill="#1c2a16" opacity=".6"/><circle cx="183.6" cy="86.6" r="2.4" fill="#46663a" opacity=".6"/><circle cx="224.1" cy="61.0" r="3.0" fill="#2a3a20" opacity=".6"/><circle cx="289.8" cy="95.1" r="2.3" fill="#1c2a16" opacity=".6"/><circle cx="258.2" cy="84.3" r="1.6" fill="#26361c" opacity=".6"/><circle cx="269.2" cy="19.7" r="1.4" fill="#26361c" opacity=".6"/><circle cx="0.2" cy="48.8" r="1.2" fill="#3d5a2c" opacity=".6"/><circle cx="42.1" cy="138.5" r="1.3" fill="#26361c" opacity=".6"/><circle cx="140.8" cy="41.3" r="2.9" fill="#3d5a2c" opacity=".6"/><circle cx="206.4" cy="11.8" r="2.9" fill="#3d5a2c" opacity=".6"/><circle cx="296.6" cy="40.4" r="1.6" fill="#26361c" opacity=".6"/><circle cx="262.3" cy="10.0" r="1.8" fill="#1c2a16" opacity=".6"/><circle cx="261.9" cy="67.0" r="2.0" fill="#46663a" opacity=".6"/><circle cx="36.0" cy="138.2" r="1.6" fill="#3d5a2c" opacity=".6"/><circle cx="235.6" cy="74.5" r="3.0" fill="#2a3a20" opacity=".6"/><circle cx="175.8" cy="45.8" r="3.0" fill="#3d5a2c" opacity=".6"/><circle cx="39.5" cy="133.6" r="3.2" fill="#46663a" opacity=".6"/><circle cx="158.2" cy="9.1" r="2.4" fill="#2a3a20" opacity=".6"/><circle cx="160.1" cy="84.7" r="1.4" fill="#2a3a20" opacity=".6"/><circle cx="163.3" cy="37.3" r="3.2" fill="#26361c" opacity=".6"/><circle cx="10.0" cy="92.3" r="2.0" fill="#2a3a20" opacity=".6"/><circle cx="276.9" cy="100.0" r="1.3" fill="#26361c" opacity=".6"/><circle cx="9.5" cy="58.3" r="2.7" fill="#2a3a20" opacity=".6"/><circle cx="163.3" cy="51.2" r="1.7" fill="#26361c" opacity=".6"/><circle cx="179.8" cy="52.3" r="2.4" fill="#26361c" opacity=".6"/><circle cx="260.1" cy="36.0" r="2.4" fill="#26361c" opacity=".6"/><circle cx="255.3" cy="6.2" r="3.0" fill="#1c2a16" opacity=".6"/><circle cx="235.9" cy="47.6" r="1.3" fill="#26361c" opacity=".6"/><circle cx="152.1" cy="75.8" r="1.5" fill="#26361c" opacity=".6"/><circle cx="234.4" cy="12.2" r="2.1" fill="#46663a" opacity=".6"/><circle cx="285.2" cy="25.7" r="3.2" fill="#2a3a20" opacity=".6"/><circle cx="43.1" cy="91.1" r="1.2" fill="#1c2a16" opacity=".6"/><circle cx="27.2" cy="111.2" r="2.0" fill="#46663a" opacity=".6"/><circle cx="22.8" cy="6.9" r="1.7" fill="#2a3a20" opacity=".6"/><circle cx="277.9" cy="72.8" r="3.1" fill="#3d5a2c" opacity=".6"/><circle cx="275.1" cy="43.7" r="2.0" fill="#26361c" opacity=".6"/><circle cx="193.6" cy="11.7" r="2.3" fill="#3d5a2c" opacity=".6"/><circle cx="275.3" cy="35.5" r="3.1" fill="#46663a" opacity=".6"/><circle cx="14.7" cy="83.7" r="1.6" fill="#26361c" opacity=".6"/><circle cx="163.8" cy="32.8" r="2.0" fill="#26361c" opacity=".6"/><circle cx="186.7" cy="36.3" r="1.6" fill="#46663a" opacity=".6"/><circle cx="114.1" cy="14.6" r="1.9" fill="#3d5a2c" opacity=".6"/><circle cx="81.8" cy="3.7" r="2.7" fill="#26361c" opacity=".6"/><circle cx="193.5" cy="43.5" r="1.9" fill="#1c2a16" opacity=".6"/><circle cx="6.1" cy="64.4" r="2.1" fill="#46663a" opacity=".6"/><circle cx="254.7" cy="76.3" r="2.7" fill="#3d5a2c" opacity=".6"/><circle cx="154.8" cy="11.0" r="2.4" fill="#46663a" opacity=".6"/><circle cx="145.6" cy="37.5" r="2.4" fill="#2a3a20" opacity=".6"/><circle cx="9.5" cy="62.5" r="2.2" fill="#46663a" opacity=".6"/><circle cx="163.3" cy="62.8" r="2.5" fill="#46663a" opacity=".6"/><circle cx="43.9" cy="41.0" r="2.3" fill="#3d5a2c" opacity=".6"/><circle cx="133.9" cy="27.3" r="2.9" fill="#2a3a20" opacity=".6"/><circle cx="102.8" cy="43.2" r="2.9" fill="#1c2a16" opacity=".6"/><circle cx="222.6" cy="96.6" r="2.8" fill="#1c2a16" opacity=".6"/><circle cx="290.7" cy="59.6" r="3.0" fill="#1c2a16" opacity=".6"/><circle cx="258.8" cy="46.9" r="1.4" fill="#3d5a2c" opacity=".6"/><circle cx="17.9" cy="76.7" r="1.8" fill="#3d5a2c" opacity=".6"/><circle cx="209.6" cy="44.3" r="1.6" fill="#46663a" opacity=".6"/><circle cx="229.0" cy="70.1" r="2.2" fill="#26361c" opacity=".6"/><circle cx="239.6" cy="95.7" r="2.6" fill="#3d5a2c" opacity=".6"/><circle cx="6.9" cy="78.3" r="3.0" fill="#3d5a2c" opacity=".6"/><circle cx="271.9" cy="54.4" r="2.2" fill="#46663a" opacity=".6"/><circle cx="174.6" cy="93.8" r="3.0" fill="#3d5a2c" opacity=".6"/><circle cx="21.5" cy="7.1" r="3.0" fill="#3d5a2c" opacity=".6"/><circle cx="168.6" cy="52.4" r="2.5" fill="#26361c" opacity=".6"/><circle cx="267.5" cy="6.2" r="2.7" fill="#26361c" opacity=".6"/><circle cx="262.2" cy="76.4" r="1.3" fill="#46663a" opacity=".6"/><circle cx="40.5" cy="101.4" r="2.2" fill="#3d5a2c" opacity=".6"/><circle cx="141.0" cy="4.2" r="1.6" fill="#2a3a20" opacity=".6"/><circle cx="162.1" cy="78.8" r="2.3" fill="#26361c" opacity=".6"/><circle cx="237.4" cy="52.8" r="3.0" fill="#1c2a16" opacity=".6"/><circle cx="47.5" cy="124.3" r="2.8" fill="#46663a" opacity=".6"/><circle cx="12.0" cy="124.3" r="2.9" fill="#46663a" opacity=".6"/><circle cx="15.9" cy="50.8" r="2.7" fill="#2a3a20" opacity=".6"/><circle cx="206.8" cy="50.6" r="1.9" fill="#3d5a2c" opacity=".6"/><circle cx="203.5" cy="36.7" r="2.9" fill="#26361c" opacity=".6"/><circle cx="246.9" cy="113.5" r="2.5" fill="#46663a" opacity=".6"/><circle cx="37.4" cy="148.0" r="2.8" fill="#3d5a2c" opacity=".6"/><circle cx="37.3" cy="75.4" r="1.7" fill="#3d5a2c" opacity=".6"/><circle cx="289.2" cy="26.7" r="2.0" fill="#3d5a2c" opacity=".6"/><circle cx="188.2" cy="79.3" r="1.3" fill="#26361c" opacity=".6"/><circle cx="212.6" cy="23.7" r="1.6" fill="#1c2a16" opacity=".6"/><circle cx="238.9" cy="80.9" r="2.9" fill="#1c2a16" opacity=".6"/><circle cx="255.0" cy="34.2" r="1.8" fill="#1c2a16" opacity=".6"/><circle cx="292.3" cy="77.9" r="2.3" fill="#26361c" opacity=".6"/><circle cx="238.5" cy="29.4" r="2.9" fill="#26361c" opacity=".6"/><circle cx="262.4" cy="86.5" r="1.8" fill="#26361c" opacity=".6"/><circle cx="5.7" cy="113.2" r="1.7" fill="#26361c" opacity=".6"/><circle cx="24.1" cy="40.2" r="1.7" fill="#2a3a20" opacity=".6"/><circle cx="15.3" cy="12.9" r="2.5" fill="#3d5a2c" opacity=".6"/><circle cx="1.2" cy="67.3" r="3.2" fill="#26361c" opacity=".6"/><circle cx="240.5" cy="79.2" r="1.6" fill="#1c2a16" opacity=".6"/><circle cx="75.2" cy="37.7" r="2.9" fill="#3d5a2c" opacity=".6"/><circle cx="296.3" cy="88.6" r="1.6" fill="#1c2a16" opacity=".6"/><circle cx="8.0" cy="33.8" r="2.5" fill="#1c2a16" opacity=".6"/><circle cx="80.8" cy="4.8" r="1.8" fill="#2a3a20" opacity=".6"/><circle cx="153.2" cy="2.1" r="1.3" fill="#26361c" opacity=".6"/><circle cx="275.5" cy="99.0" r="2.8" fill="#3d5a2c" opacity=".6"/><circle cx="293.8" cy="20.2" r="2.0" fill="#46663a" opacity=".6"/><circle cx="210.2" cy="50.1" r="1.2" fill="#2a3a20" opacity=".6"/><circle cx="171.9" cy="45.4" r="2.6" fill="#46663a" opacity=".6"/><circle cx="150.8" cy="55.4" r="2.5" fill="#3d5a2c" opacity=".6"/><circle cx="19.9" cy="130.7" r="1.4" fill="#2a3a20" opacity=".6"/><circle cx="42.6" cy="70.1" r="1.2" fill="#46663a" opacity=".6"/><circle cx="119.1" cy="10.4" r="1.8" fill="#1c2a16" opacity=".6"/><circle cx="210.4" cy="35.6" r="1.3" fill="#3d5a2c" opacity=".6"/><circle cx="156.5" cy="2.0" r="3.0" fill="#46663a" opacity=".6"/><circle cx="16.5" cy="123.3" r="3.0" fill="#3d5a2c" opacity=".6"/><circle cx="205.6" cy="90.6" r="2.0" fill="#46663a" opacity=".6"/><circle cx="153.5" cy="6.4" r="2.1" fill="#46663a" opacity=".6"/><circle cx="277.6" cy="30.4" r="1.9" fill="#46663a" opacity=".6"/><circle cx="164.4" cy="10.5" r="2.7" fill="#26361c" opacity=".6"/><circle cx="267.4" cy="22.2" r="2.9" fill="#26361c" opacity=".6"/><circle cx="212.1" cy="50.1" r="2.1" fill="#3d5a2c" opacity=".6"/><circle cx="191.8" cy="14.7" r="2.1" fill="#2a3a20" opacity=".6"/><circle cx="21.5" cy="99.3" r="2.7" fill="#1c2a16" opacity=".6"/><circle cx="237.4" cy="30.4" r="1.6" fill="#3d5a2c" opacity=".6"/><circle cx="284.7" cy="43.9" r="1.4" fill="#3d5a2c" opacity=".6"/><circle cx="268.7" cy="14.4" r="2.3" fill="#26361c" opacity=".6"/><circle cx="289.1" cy="112.0" r="2.0" fill="#46663a" opacity=".6"/><circle cx="196.2" cy="41.7" r="1.6" fill="#26361c" opacity=".6"/><circle cx="38.2" cy="138.8" r="1.3" fill="#46663a" opacity=".6"/><circle cx="91.6" cy="1.6" r="2.6" fill="#1c2a16" opacity=".6"/><circle cx="219.4" cy="72.1" r="2.7" fill="#3d5a2c" opacity=".6"/><circle cx="182.6" cy="55.8" r="2.2" fill="#26361c" opacity=".6"/><circle cx="280.6" cy="69.3" r="1.7" fill="#46663a" opacity=".6"/><circle cx="172.6" cy="57.0" r="3.1" fill="#3d5a2c" opacity=".6"/><circle cx="23.3" cy="129.7" r="3.1" fill="#26361c" opacity=".6"/><circle cx="179.2" cy="89.7" r="1.9" fill="#1c2a16" opacity=".6"/><circle cx="196.2" cy="53.5" r="2.5" fill="#1c2a16" opacity=".6"/><circle cx="253.4" cy="118.1" r="2.5" fill="#2a3a20" opacity=".6"/><circle cx="135.0" cy="41.8" r="1.2" fill="#3d5a2c" opacity=".6"/><circle cx="9.0" cy="118.0" r="3.2" fill="#3d5a2c" opacity=".6"/><circle cx="199.1" cy="31.1" r="1.9" fill="#1c2a16" opacity=".6"/><circle cx="295.8" cy="79.0" r="2.5" fill="#26361c" opacity=".6"/><circle cx="19.8" cy="92.4" r="2.8" fill="#46663a" opacity=".6"/><circle cx="277.8" cy="103.6" r="1.6" fill="#2a3a20" opacity=".6"/><circle cx="110.2" cy="28.6" r="1.4" fill="#46663a" opacity=".6"/><circle cx="236.8" cy="0.7" r="2.8" fill="#2a3a20" opacity=".6"/><circle cx="289.0" cy="94.8" r="2.1" fill="#1c2a16" opacity=".6"/><circle cx="46.4" cy="74.2" r="3.1" fill="#3d5a2c" opacity=".6"/><circle cx="267.0" cy="4.8" r="2.0" fill="#3d5a2c" opacity=".6"/><circle cx="297.7" cy="112.8" r="2.3" fill="#1c2a16" opacity=".6"/><circle cx="38.7" cy="17.7" r="1.8" fill="#2a3a20" opacity=".6"/><circle cx="176.1" cy="93.3" r="2.4" fill="#26361c" opacity=".6"/><circle cx="241.3" cy="100.8" r="3.1" fill="#26361c" opacity=".6"/><circle cx="156.4" cy="81.3" r="3.1" fill="#2a3a20" opacity=".6"/><circle cx="212.4" cy="23.8" r="1.7" fill="#1c2a16" opacity=".6"/><circle cx="237.5" cy="21.9" r="1.5" fill="#46663a" opacity=".6"/><circle cx="158.3" cy="5.7" r="2.2" fill="#1c2a16" opacity=".6"/><circle cx="271.8" cy="108.6" r="2.0" fill="#1c2a16" opacity=".6"/><circle cx="89.2" cy="42.9" r="1.4" fill="#2a3a20" opacity=".6"/><circle cx="273.8" cy="65.8" r="1.6" fill="#46663a" opacity=".6"/><circle cx="296.0" cy="112.0" r="2.3" fill="#26361c" opacity=".6"/><circle cx="220.3" cy="51.7" r="1.4" fill="#3d5a2c" opacity=".6"/><circle cx="235.9" cy="76.9" r="1.9" fill="#46663a" opacity=".6"/><circle cx="34.8" cy="62.2" r="1.3" fill="#2a3a20" opacity=".6"/><circle cx="119.1" cy="44.5" r="2.6" fill="#1c2a16" opacity=".6"/><circle cx="9.7" cy="71.9" r="2.2" fill="#26361c" opacity=".6"/><circle cx="31.3" cy="137.5" r="3.1" fill="#3d5a2c" opacity=".6"/><circle cx="15.8" cy="18.6" r="2.4" fill="#3d5a2c" opacity=".6"/><circle cx="192.9" cy="74.7" r="1.8" fill="#1c2a16" opacity=".6"/><circle cx="202.6" cy="17.1" r="2.9" fill="#26361c" opacity=".6"/><circle cx="191.4" cy="11.3" r="1.3" fill="#46663a" opacity=".6"/><circle cx="1.7" cy="147.4" r="1.9" fill="#46663a" opacity=".6"/><circle cx="244.7" cy="34.5" r="2.1" fill="#1c2a16" opacity=".6"/><circle cx="224.0" cy="75.6" r="2.6" fill="#46663a" opacity=".6"/><circle cx="238.7" cy="89.0" r="2.9" fill="#1c2a16" opacity=".6"/><circle cx="285.1" cy="71.2" r="2.6" fill="#2a3a20" opacity=".6"/><circle cx="209.5" cy="79.4" r="1.4" fill="#2a3a20" opacity=".6"/><circle cx="258.6" cy="19.4" r="2.3" fill="#3d5a2c" opacity=".6"/><circle cx="250.1" cy="24.7" r="2.1" fill="#3d5a2c" opacity=".6"/><circle cx="9.4" cy="86.4" r="1.6" fill="#46663a" opacity=".6"/><circle cx="209.5" cy="98.9" r="2.6" fill="#46663a" opacity=".6"/><circle cx="31.4" cy="148.5" r="2.7" fill="#26361c" opacity=".6"/><circle cx="96.6" cy="2.9" r="2.5" fill="#26361c" opacity=".6"/><circle cx="203.8" cy="90.6" r="2.9" fill="#2a3a20" opacity=".6"/><circle cx="76.6" cy="12.8" r="2.0" fill="#3d5a2c" opacity=".6"/><circle cx="213.5" cy="86.5" r="1.3" fill="#2a3a20" opacity=".6"/><circle cx="158.2" cy="77.3" r="1.7" fill="#1c2a16" opacity=".6"/><circle cx="10.5" cy="139.7" r="1.5" fill="#2a3a20" opacity=".6"/><circle cx="73.6" cy="31.2" r="2.9" fill="#26361c" opacity=".6"/><circle cx="219.8" cy="68.8" r="2.7" fill="#26361c" opacity=".6"/><circle cx="214.1" cy="58.2" r="1.4" fill="#3d5a2c" opacity=".6"/><circle cx="106.7" cy="34.5" r="2.5" fill="#3d5a2c" opacity=".6"/><circle cx="78.3" cy="15.2" r="1.8" fill="#1c2a16" opacity=".6"/><circle cx="260.4" cy="32.0" r="2.9" fill="#2a3a20" opacity=".6"/><circle cx="281.2" cy="101.1" r="2.7" fill="#2a3a20" opacity=".6"/><circle cx="263.9" cy="15.1" r="1.4" fill="#2a3a20" opacity=".6"/><circle cx="30.4" cy="113.1" r="1.6" fill="#1c2a16" opacity=".6"/><circle cx="198.1" cy="28.1" r="2.3" fill="#46663a" opacity=".6"/><circle cx="155.3" cy="15.4" r="2.6" fill="#2a3a20" opacity=".6"/><circle cx="25.6" cy="138.9" r="2.2" fill="#2a3a20" opacity=".6"/><circle cx="23.5" cy="97.4" r="3.1" fill="#2a3a20" opacity=".6"/><circle cx="267.8" cy="17.8" r="1.7" fill="#3d5a2c" opacity=".6"/><circle cx="45.0" cy="108.2" r="2.9" fill="#26361c" opacity=".6"/><circle cx="278.6" cy="4.0" r="2.8" fill="#46663a" opacity=".6"/><circle cx="297.0" cy="114.3" r="1.8" fill="#2a3a20" opacity=".6"/><circle cx="32.5" cy="59.6" r="3.1" fill="#3d5a2c" opacity=".6"/><circle cx="7.2" cy="6.4" r="2.6" fill="#26361c" opacity=".6"/><circle cx="0.2" cy="13.6" r="3.2" fill="#26361c" opacity=".6"/><circle cx="248.3" cy="81.5" r="1.6" fill="#3d5a2c" opacity=".6"/><circle cx="72.1" cy="9.6" r="2.3" fill="#3d5a2c" opacity=".6"/><circle cx="262.8" cy="35.1" r="1.6" fill="#26361c" opacity=".6"/><circle cx="134.5" cy="44.2" r="1.6" fill="#3d5a2c" opacity=".6"/><circle cx="170.9" cy="4.5" r="1.7" fill="#3d5a2c" opacity=".6"/><circle cx="235.5" cy="108.0" r="2.6" fill="#1c2a16" opacity=".6"/><circle cx="150.1" cy="88.3" r="2.0" fill="#1c2a16" opacity=".6"/><circle cx="295.0" cy="74.1" r="1.3" fill="#3d5a2c" opacity=".6"/><circle cx="298.0" cy="83.8" r="1.9" fill="#26361c" opacity=".6"/><circle cx="235.5" cy="75.9" r="2.3" fill="#3d5a2c" opacity=".6"/><circle cx="281.3" cy="13.6" r="1.3" fill="#1c2a16" opacity=".6"/><circle cx="126.6" cy="31.7" r="1.6" fill="#1c2a16" opacity=".6"/><circle cx="277.6" cy="68.4" r="1.5" fill="#26361c" opacity=".6"/><circle cx="35.8" cy="54.6" r="3.2" fill="#1c2a16" opacity=".6"/><circle cx="36.7" cy="64.3" r="1.4" fill="#2a3a20" opacity=".6"/><circle cx="24.3" cy="44.6" r="3.0" fill="#1c2a16" opacity=".6"/><circle cx="201.8" cy="37.2" r="2.5" fill="#3d5a2c" opacity=".6"/><circle cx="31.2" cy="96.7" r="2.1" fill="#2a3a20" opacity=".6"/><circle cx="138.6" cy="38.2" r="3.2" fill="#46663a" opacity=".6"/><circle cx="119.4" cy="10.4" r="1.3" fill="#26361c" opacity=".6"/><circle cx="286.4" cy="4.8" r="2.8" fill="#46663a" opacity=".6"/><circle cx="138.6" cy="36.5" r="1.5" fill="#1c2a16" opacity=".6"/><circle cx="289.6" cy="67.3" r="2.3" fill="#2a3a20" opacity=".6"/><circle cx="204.9" cy="50.2" r="1.5" fill="#3d5a2c" opacity=".6"/><circle cx="42.8" cy="115.9" r="2.0" fill="#2a3a20" opacity=".6"/><circle cx="161.0" cy="92.1" r="3.1" fill="#3d5a2c" opacity=".6"/><circle cx="196.1" cy="93.7" r="3.2" fill="#2a3a20" opacity=".6"/><circle cx="86.0" cy="34.2" r="1.7" fill="#3d5a2c" opacity=".6"/><circle cx="173.9" cy="31.5" r="1.8" fill="#3d5a2c" opacity=".6"/><circle cx="28.9" cy="137.5" r="2.2" fill="#3d5a2c" opacity=".6"/><circle cx="33.4" cy="149.0" r="2.5" fill="#2a3a20" opacity=".6"/><circle cx="252.4" cy="113.7" r="1.4" fill="#1c2a16" opacity=".6"/><circle cx="237.8" cy="50.9" r="1.4" fill="#2a3a20" opacity=".6"/><circle cx="105.2" cy="11.6" r="2.2" fill="#1c2a16" opacity=".6"/><circle cx="250.7" cy="100.6" r="3.1" fill="#3d5a2c" opacity=".6"/><circle cx="199.0" cy="25.6" r="2.8" fill="#26361c" opacity=".6"/><circle cx="238.8" cy="35.2" r="1.8" fill="#46663a" opacity=".6"/><circle cx="6.8" cy="102.4" r="2.1" fill="#3d5a2c" opacity=".6"/><circle cx="47.6" cy="51.9" r="2.9" fill="#3d5a2c" opacity=".6"/><circle cx="92.6" cy="37.2" r="3.2" fill="#3d5a2c" opacity=".6"/><circle cx="185.6" cy="25.1" r="2.1" fill="#1c2a16" opacity=".6"/><circle cx="275.5" cy="45.0" r="1.3" fill="#3d5a2c" opacity=".6"/><circle cx="263.3" cy="100.0" r="1.7" fill="#26361c" opacity=".6"/><circle cx="184.3" cy="23.5" r="2.2" fill="#26361c" opacity=".6"/><circle cx="271.6" cy="58.1" r="2.4" fill="#2a3a20" opacity=".6"/><circle cx="155.7" cy="97.6" r="1.4" fill="#1c2a16" opacity=".6"/><circle cx="210.1" cy="10.1" r="1.7" fill="#2a3a20" opacity=".6"/><circle cx="20.9" cy="10.4" r="1.8" fill="#3d5a2c" opacity=".6"/><circle cx="158.4" cy="43.1" r="2.8" fill="#26361c" opacity=".6"/><circle cx="273.1" cy="15.8" r="2.1" fill="#46663a" opacity=".6"/><circle cx="297.2" cy="105.5" r="1.6" fill="#26361c" opacity=".6"/><circle cx="234.6" cy="116.9" r="1.7" fill="#3d5a2c" opacity=".6"/><circle cx="237.6" cy="8.3" r="2.1" fill="#1c2a16" opacity=".6"/><circle cx="128.9" cy="21.3" r="1.6" fill="#46663a" opacity=".6"/><circle cx="164.0" cy="0.4" r="2.6" fill="#46663a" opacity=".6"/><circle cx="130.4" cy="25.6" r="2.2" fill="#46663a" opacity=".6"/><circle cx="233.8" cy="49.0" r="2.6" fill="#26361c" opacity=".6"/><circle cx="183.5" cy="9.3" r="1.5" fill="#2a3a20" opacity=".6"/><circle cx="16.3" cy="94.7" r="2.0" fill="#1c2a16" opacity=".6"/><circle cx="184.5" cy="41.6" r="2.9" fill="#26361c" opacity=".6"/><circle cx="35.7" cy="60.8" r="2.9" fill="#26361c" opacity=".6"/><circle cx="27.6" cy="53.6" r="1.9" fill="#26361c" opacity=".6"/></g><path d="M256 186 C268 175 284 165 298 158 V188 C284 192 270 194 256 194 Z" fill="#202833" filter="url(#blur2)"/><path d="M182 122 C200 114 225 120 240 128 C250 134 258 140 264 144" stroke="#3c3527" stroke-width="1.1" fill="none" opacity=".75"/><path d="M182 128 C200 120 225 126 240 134 C250 140 258 146 264 150" stroke="#3c3527" stroke-width="1.1" fill="none" opacity=".75"/><path d="M182 134 C200 126 225 132 240 140 C250 146 258 152 264 156" stroke="#3c3527" stroke-width="1.1" fill="none" opacity=".75"/><path d="M182 140 C200 132 225 138 240 146 C250 152 258 158 264 162" stroke="#3c3527" stroke-width="1.1" fill="none" opacity=".75"/><path d="M182 146 C200 138 225 144 240 152 C250 158 258 164 264 168" stroke="#3c3527" stroke-width="1.1" fill="none" opacity=".75"/><path d="M182 152 C200 144 225 150 240 158 C250 164 258 170 264 174" stroke="#3c3527" stroke-width="1.1" fill="none" opacity=".75"/><path d="M182 158 C200 150 225 156 240 164 C250 170 258 176 264 180" stroke="#3c3527" stroke-width="1.1" fill="none" opacity=".75"/><path d="M182 164 C200 156 225 162 240 170 C250 176 258 182 264 186" stroke="#3c3527" stroke-width="1.1" fill="none" opacity=".75"/><path d="M182 170 C200 162 225 168 240 176 C250 182 258 188 264 192" stroke="#3c3527" stroke-width="1.1" fill="none" opacity=".75"/><path d="M182 176 C200 168 225 174 240 182 C250 188 258 194 264 198" stroke="#3c3527" stroke-width="1.1" fill="none" opacity=".75"/><path d="M182 182 C200 174 225 180 240 188 C250 194 258 200 264 204" stroke="#3c3527" stroke-width="1.1" fill="none" opacity=".75"/><path d="M182 188 C200 180 225 186 240 194 C250 200 258 206 264 210" stroke="#3c3527" stroke-width="1.1" fill="none" opacity=".75"/><path d="M182 194 C200 186 225 192 240 200 C250 206 258 212 264 216" stroke="#3c3527" stroke-width="1.1" fill="none" opacity=".75"/><path d="M182 200 C200 192 225 198 240 206 C250 212 258 218 264 222" stroke="#3c3527" stroke-width="1.1" fill="none" opacity=".75"/><path d="M262.0 178 C268.0 160 276.0 135 286.0 110" stroke="#3b3426" stroke-width="1.4" fill="none" opacity=".8"/><path d="M267.5 178 C273.5 160 281.5 135 291.5 110" stroke="#3b3426" stroke-width="1.4" fill="none" opacity=".8"/><path d="M273.0 178 C279.0 160 287.0 135 297.0 110" stroke="#3b3426" stroke-width="1.4" fill="none" opacity=".8"/><path d="M278.5 178 C284.5 160 292.5 135 302.5 110" stroke="#3b3426" stroke-width="1.4" fill="none" opacity=".8"/><path d="M284.0 178 C290.0 160 298.0 135 308.0 110" stroke="#3b3426" stroke-width="1.4" fill="none" opacity=".8"/><path d="M289.5 178 C295.5 160 303.5 135 313.5 110" stroke="#3b3426" stroke-width="1.4" fill="none" opacity=".8"/><path d="M295.0 178 C301.0 160 309.0 135 319.0 110" stroke="#3b3426" stroke-width="1.4" fill="none" opacity=".8"/><g stroke="#b59d72" fill="none" stroke-linecap="round" opacity=".85"><path d="M220 2 C226 25 236 45 245 60 M215 52 C232 50 250 56 262 62 M52 118 C48 140 52 162 72 188 C78 194 82 198 85 200" stroke-width="1.6"/><path d="M0 10 C8 12 14 14 18 18 M150 35 C160 30 170 33 176 38" stroke-width="1.3"/></g><g stroke="#a19f99" stroke-width="2.8" fill="none" stroke-linecap="round" stroke-linejoin="round"><path d="M62.7 0 C63 6 65 10 66 14 C72 22 78 28 84 32 C90 38 96 43 102 45 C108 47 114 47.5 120 48 C126 49 130 50 134 52 C138 55 140 58 141.5 62 C143 66 144 71 144.5 76 C145.5 85 148 95 155 102 C160 106 163 106 165.5 108 C169 112 171 116 173.5 120 C176 125 179 130 181.5 135.5 C184 141 187 146 189 151.5 C192 157 195 162 197 167.5 C200 173 203 178 205 183 C207 190 208.5 195 209 200"/><path d="M107.6 127.5 C114 128 120 129 125.5 129.5 C131 131 136 133 141.4 135.5 C147 138 152 141 157.4 145.4 C161 149 163 152 165.3 155.4 C167 159 168 163 169.3 167.3 C171 172 173 177 175.3 181.3 C178 185 180 188 183.3 191.2 C186 194 188 197 189.2 200"/><path d="M107.6 127.5 C101 128 95 130 89.6 131.5 C84 133 79 134 73.7 135.5 C69 136 65 136.5 61.7 137.5 C57 142 55 147 53.8 151.4 C52 156 51.5 161 51.8 165.3 C54 169 57 172 59.7 175.3 C63 179 66 182 69.7 185.3 C73 190 76 195 79.7 200"/><path d="M89.6 77.7 C91 83 92 87 93.6 91.6 C95 96 96 100 97.6 103.6 C99 109 101 114 103.6 119.5 C105 123 106 125 107.6 127.5"/><path d="M77.7 149.4 C83 150 88 151 93.6 151.4 C98 152 102 153 105.6 155.4 C107 160 107.5 165 107.6 171.3 C108 176 109 182 109.5 187.3 C107 192 104 196 101.6 200"/><path d="M19.9 179.3 C25 180 30 180.5 35.8 181.3 C40 184 44 187 47.8 191.2"/></g><rect x="110" y="105" width="9" height="11" fill="#c9c6bd" transform="rotate(-20 114 110)"/><rect x="173" y="80" width="8" height="7" fill="#8f8e88"/><rect x="126" y="116" width="8" height="7" fill="#9a9890"/><g transform="rotate(-0 80.7 61.7)"><rect x="78.8" y="59.1" width="6.8" height="6.1" fill="#ebe7df" opacity=".7"/><rect x="77.3" y="58.6" width="6.8" height="6.1" fill="#d9783e"/></g><g transform="rotate(5 86.6 75.7)"><rect x="84.6" y="73.0" width="6.9" height="6.4" fill="#ebe7df" opacity=".7"/><rect x="83.1" y="72.5" width="6.9" height="6.4" fill="#d9783e"/></g><g transform="rotate(5 85.6 91.6)"><rect x="83.6" y="89.0" width="6.9" height="6.3" fill="#ebe7df" opacity=".7"/><rect x="82.1" y="88.5" width="6.9" height="6.3" fill="#d9783e"/></g><g transform="rotate(-17 83.6 101.6)"><rect x="81.1" y="98.6" width="8.0" height="7.1" fill="#ebe7df" opacity=".7"/><rect x="79.6" y="98.1" width="8.0" height="7.1" fill="#d9783e"/></g><g transform="rotate(-22 89.6 102.6)"><rect x="87.4" y="99.6" width="7.3" height="7.0" fill="#ebe7df" opacity=".7"/><rect x="85.9" y="99.1" width="7.3" height="7.0" fill="#d9783e"/></g><g transform="rotate(-5 103.6 99.6)"><rect x="101.4" y="96.4" width="7.4" height="7.4" fill="#ebe7df" opacity=".7"/><rect x="99.9" y="95.9" width="7.4" height="7.4" fill="#d9783e"/></g><g transform="rotate(-6 93.6 112.5)"><rect x="91.4" y="109.8" width="7.3" height="6.4" fill="#ebe7df" opacity=".7"/><rect x="89.9" y="109.3" width="7.3" height="6.4" fill="#d9783e"/></g><g transform="rotate(-11 109.5 110.5)"><rect x="107.8" y="107.5" width="6.5" height="7.0" fill="#ebe7df" opacity=".7"/><rect x="106.3" y="107.0" width="6.5" height="7.0" fill="#d9783e"/></g><g transform="rotate(-3 97.6 122.5)"><rect x="95.1" y="119.9" width="8.0" height="6.2" fill="#ebe7df" opacity=".7"/><rect x="93.6" y="119.4" width="8.0" height="6.2" fill="#d9783e"/></g><g transform="rotate(-1 113.5 121.5)"><rect x="112.0" y="118.8" width="6.0" height="6.3" fill="#ebe7df" opacity=".7"/><rect x="110.5" y="118.3" width="6.0" height="6.3" fill="#d9783e"/></g><g transform="rotate(-25 147.4 80.7)"><rect x="145.6" y="77.8" width="6.5" height="6.7" fill="#ebe7df" opacity=".7"/><rect x="144.1" y="77.3" width="6.5" height="6.7" fill="#d9783e"/></g><g transform="rotate(-26 167.3 99.6)"><rect x="165.4" y="96.4" width="6.8" height="7.5" fill="#ebe7df" opacity=".7"/><rect x="163.9" y="95.9" width="6.8" height="7.5" fill="#d9783e"/></g><g transform="rotate(-9 133.5 122.5)"><rect x="131.1" y="120.2" width="7.8" height="5.6" fill="#ebe7df" opacity=".7"/><rect x="129.6" y="119.7" width="7.8" height="5.6" fill="#d9783e"/></g><g transform="rotate(-17 144.4 128.5)"><rect x="142.1" y="125.4" width="7.6" height="7.2" fill="#ebe7df" opacity=".7"/><rect x="140.6" y="124.9" width="7.6" height="7.2" fill="#d9783e"/></g><g transform="rotate(-1 153.4 133.5)"><rect x="151.3" y="130.5" width="7.2" height="6.9" fill="#ebe7df" opacity=".7"/><rect x="149.8" y="130.0" width="7.2" height="6.9" fill="#d9783e"/></g><g transform="rotate(-24 165.3 121.5)"><rect x="163.1" y="118.7" width="7.5" height="6.7" fill="#ebe7df" opacity=".7"/><rect x="161.6" y="118.2" width="7.5" height="6.7" fill="#d9783e"/></g><g transform="rotate(-11 168.3 129.5)"><rect x="166.1" y="126.7" width="7.4" height="6.6" fill="#ebe7df" opacity=".7"/><rect x="164.6" y="126.2" width="7.4" height="6.6" fill="#d9783e"/></g><g transform="rotate(0 171.3 151.4)"><rect x="168.8" y="149.0" width="8.0" height="5.8" fill="#ebe7df" opacity=".7"/><rect x="167.3" y="148.5" width="8.0" height="5.8" fill="#d9783e"/></g><g transform="rotate(8 174.3 161.4)"><rect x="172.5" y="158.4" width="6.6" height="7.0" fill="#ebe7df" opacity=".7"/><rect x="171.0" y="157.9" width="6.6" height="7.0" fill="#d9783e"/></g><g transform="rotate(-11 181.3 145.4)"><rect x="179.5" y="142.6" width="6.5" height="6.6" fill="#ebe7df" opacity=".7"/><rect x="178.0" y="142.1" width="6.5" height="6.6" fill="#d9783e"/></g><g transform="rotate(-7 66.7 141.4)"><rect x="64.7" y="139.0" width="7.0" height="5.8" fill="#ebe7df" opacity=".7"/><rect x="63.2" y="138.5" width="7.0" height="5.8" fill="#d9783e"/></g><g transform="rotate(-22 87.6 143.4)"><rect x="85.2" y="140.5" width="7.8" height="6.8" fill="#ebe7df" opacity=".7"/><rect x="83.7" y="140.0" width="7.8" height="6.8" fill="#d9783e"/></g><g transform="rotate(-28 108.6 136.5)"><rect x="106.3" y="133.8" width="7.6" height="6.3" fill="#ebe7df" opacity=".7"/><rect x="104.8" y="133.3" width="7.6" height="6.3" fill="#d9783e"/></g><g transform="rotate(-11 118.5 145.4)"><rect x="116.4" y="142.7" width="7.2" height="6.4" fill="#ebe7df" opacity=".7"/><rect x="114.9" y="142.2" width="7.2" height="6.4" fill="#d9783e"/></g><g transform="rotate(8 83.6 155.4)"><rect x="81.1" y="152.6" width="8.0" height="6.6" fill="#ebe7df" opacity=".7"/><rect x="79.6" y="152.1" width="8.0" height="6.6" fill="#d9783e"/></g><g transform="rotate(-32 100.6 163.4)"><rect x="98.7" y="160.4" width="6.7" height="7.0" fill="#ebe7df" opacity=".7"/><rect x="97.2" y="159.9" width="6.7" height="7.0" fill="#d9783e"/></g><g transform="rotate(-4 117.5 167.3)"><rect x="115.7" y="164.4" width="6.6" height="6.9" fill="#ebe7df" opacity=".7"/><rect x="114.2" y="163.9" width="6.6" height="6.9" fill="#d9783e"/></g><g transform="rotate(-23 113.5 175.3)"><rect x="111.2" y="172.7" width="7.7" height="6.3" fill="#ebe7df" opacity=".7"/><rect x="109.7" y="172.2" width="7.7" height="6.3" fill="#d9783e"/></g><g transform="rotate(-34 137.4 161.4)"><rect x="135.5" y="158.6" width="6.7" height="6.6" fill="#ebe7df" opacity=".7"/><rect x="134.0" y="158.1" width="6.7" height="6.6" fill="#d9783e"/></g><g transform="rotate(-28 61.7 165.3)"><rect x="59.8" y="162.4" width="6.7" height="6.8" fill="#ebe7df" opacity=".7"/><rect x="58.3" y="161.9" width="6.7" height="6.8" fill="#d9783e"/></g><g transform="rotate(7 71.7 171.3)"><rect x="69.9" y="168.2" width="6.6" height="7.2" fill="#ebe7df" opacity=".7"/><rect x="68.4" y="167.7" width="6.6" height="7.2" fill="#d9783e"/></g><g transform="rotate(-30 93.6 181.3)"><rect x="91.9" y="178.9" width="6.5" height="5.9" fill="#ebe7df" opacity=".7"/><rect x="90.4" y="178.4" width="6.5" height="5.9" fill="#d9783e"/></g><g transform="rotate(-2 83.6 188.3)"><rect x="82.0" y="185.3" width="6.2" height="7.1" fill="#ebe7df" opacity=".7"/><rect x="80.5" y="184.8" width="6.2" height="7.1" fill="#d9783e"/></g><g transform="rotate(-4 167.3 181.3)"><rect x="165.5" y="178.6" width="6.5" height="6.5" fill="#ebe7df" opacity=".7"/><rect x="164.0" y="178.1" width="6.5" height="6.5" fill="#d9783e"/></g><g transform="rotate(4 191.2 189.2)"><rect x="189.7" y="186.1" width="6.1" height="7.1" fill="#ebe7df" opacity=".7"/><rect x="188.2" y="185.6" width="6.1" height="7.1" fill="#d9783e"/></g><g transform="rotate(-4 175.3 195.2)"><rect x="173.6" y="192.2" width="6.4" height="6.9" fill="#ebe7df" opacity=".7"/><rect x="172.1" y="191.7" width="6.4" height="6.9" fill="#d9783e"/></g><g transform="rotate(-25 11.9 167.3)"><rect x="10.1" y="164.2" width="6.7" height="7.3" fill="#ebe7df" opacity=".7"/><rect x="8.6" y="163.7" width="6.7" height="7.3" fill="#d9783e"/></g><g transform="rotate(-15 13.9 173.3)"><rect x="11.9" y="170.7" width="6.9" height="6.1" fill="#ebe7df" opacity=".7"/><rect x="10.4" y="170.2" width="6.9" height="6.1" fill="#d9783e"/></g><g transform="rotate(-8 15.9 189.2)"><rect x="13.6" y="186.4" width="7.6" height="6.6" fill="#ebe7df" opacity=".7"/><rect x="12.1" y="185.9" width="7.6" height="6.6" fill="#d9783e"/></g><g transform="rotate(-25 22.9 195.2)"><rect x="20.4" y="192.7" width="8.0" height="5.9" fill="#ebe7df" opacity=".7"/><rect x="18.9" y="192.2" width="8.0" height="5.9" fill="#d9783e"/></g><g transform="rotate(8 31.8 191.2)"><rect x="29.7" y="188.8" width="7.2" height="5.8" fill="#ebe7df" opacity=".7"/><rect x="28.2" y="188.3" width="7.2" height="5.8" fill="#d9783e"/></g><g transform="rotate(-16 41.8 197.2)"><rect x="40.0" y="194.5" width="6.7" height="6.4" fill="#ebe7df" opacity=".7"/><rect x="38.5" y="194.0" width="6.7" height="6.4" fill="#d9783e"/></g><g transform="rotate(-5 59.7 149.4)"><rect x="57.4" y="146.2" width="7.7" height="7.3" fill="#ebe7df" opacity=".7"/><rect x="55.9" y="145.7" width="7.7" height="7.3" fill="#d9783e"/></g><g transform="rotate(-3 49.8 4.0)"><rect x="48.1" y="1.4" width="6.3" height="6.2" fill="#ebe7df" opacity=".7"/><rect x="46.6" y="0.9" width="6.3" height="6.2" fill="#d9783e"/></g><g transform="rotate(4 81.6 125.5)"><rect x="79.9" y="122.4" width="6.4" height="7.3" fill="#ebe7df" opacity=".7"/><rect x="78.4" y="121.9" width="6.4" height="7.3" fill="#d9783e"/></g><circle cx="149" cy="100" r="14.2" fill="#ffffff"/><circle cx="149" cy="100" r="11.9" fill="#28c76f"/><g fill="none" stroke="#ffffff" stroke-width="1.1" stroke-linecap="round"><path d="M144.5 97.5 a6.5 6.5 0 0 1 9 0"/><path d="M146 99.5 a4 4 0 0 1 6 0"/><path d="M147.5 101.5 a2 2 0 0 1 3 0"/></g><rect x="12" y="12" width="30" height="60" rx="4" fill="#ffffff"/><line x1="12" y1="42" x2="42" y2="42" stroke="#c8c8c8" stroke-width="1"/><path d="M20.8 27.5 H33.2 M27 21.3 V33.7" stroke="#111" stroke-width="3.2"/><path d="M21 57.3 H33.2" stroke="#111" stroke-width="2.8"/><rect x="237" y="183" width="61" height="17" fill="rgba(255,255,255,0.85)"/><rect x="242" y="187.5" width="12" height="4.3" fill="#4a7fe0"/><rect x="242" y="191.8" width="12" height="4.3" fill="#ffd500"/><text x="257" y="196" font-family="Liberation Sans" font-size="11.8" fill="#0078a8">Leaflet</text></g></svg>
<div class="b" style="left:422px;top:530px;width:40px;height:40px;background:#424659;border-radius:50%"></div>
<svg class="ic" style="left:431px;top:539px;width:22px;height:22px" viewBox="0 0 24 24" fill="none" stroke="#12b63e" stroke-width="1.6" stroke-linecap="round" stroke-linejoin="round" ><path d="M12 18l.01 0"/><path d="M9.172 15.172a4 4 0 0 1 5.656 0"/><path d="M6.343 12.343a8 8 0 0 1 11.314 0"/><path d="M3.515 9.515c4.686 -4.687 12.284 -4.687 17 0"/></svg>
<div class="t" style="left:474.20px;top:532.58px;font-size:14.2px;color:#c9cdea;font-weight:400;-webkit-text-stroke:.3px">há 1 minuto</div>
<div class="t" style="left:474.20px;top:553.74px;font-size:13.3px;color:#b0b7dc;font-weight:400;">Últimos Dados</div>
<div class="b" style="left:601px;top:530px;width:40px;height:40px;background:#2e4b4f;border-radius:50%"></div>
<svg class="ic" style="left:610px;top:539px;width:22px;height:22px" viewBox="0 0 24 24" fill="none" stroke="#28c76f" stroke-width="1.6" stroke-linecap="round" stroke-linejoin="round" ><path d="M6 7h11a2 2 0 0 1 2 2v.5a.5 .5 0 0 0 .5 .5a.5 .5 0 0 1 .5 .5v3a.5 .5 0 0 1 -.5 .5a.5 .5 0 0 0 -.5 .5v.5a2 2 0 0 1 -2 2h-11a2 2 0 0 1 -2 -2v-6a2 2 0 0 1 2 -2"/><path d="M7 10l0 4"/><path d="M10 10l0 4"/><path d="M13 10l0 4"/><path d="M16 10l0 4"/></svg>
<div class="t" style="left:652.70px;top:532.58px;font-size:14.2px;color:#c9cdea;font-weight:400;-webkit-text-stroke:.3px">91%</div>
<div class="t" style="left:652.70px;top:553.74px;font-size:13.3px;color:#b0b7dc;font-weight:400;">Bateria</div>
<div class="b" style="left:394px;top:611px;width:330px;height:272px;background:#2f3349;border-radius:14px;"></div>
<div class="t" style="left:418.60px;top:644.81px;font-size:18.3px;color:#c9cdea;font-weight:400;">Opções</div>
<svg class="ic" style="left:670px;top:643px;width:22px;height:22px" viewBox="0 0 24 24" fill="none" stroke="#b0b7dc" stroke-width="1.5" stroke-linecap="round" stroke-linejoin="round" ><path d="M6 15l6 -6l6 6"/></svg>
<div class="b" style="left:418px;top:697px;width:282px;height:38px;background:#42465b;border-radius:6px;"></div>
<div class="t" style="left:359.00px;width:400px;text-align:center;top:707.60px;font-size:15px;color:#b9bccd;font-weight:400;letter-spacing:.6px">Exportar CSV</div>
<div class="b" style="left:418px;top:759px;width:282px;height:38px;background:#42465b;border-radius:6px;"></div>
<div class="t" style="left:359.00px;width:400px;text-align:center;top:769.60px;font-size:15px;color:#b9bccd;font-weight:400;letter-spacing:.6px">Editar Dispositivo</div>
<div class="b" style="left:418px;top:821px;width:282px;height:38px;background:#42465b;border-radius:6px;"></div>
<div class="t" style="left:359.00px;width:400px;text-align:center;top:831.60px;font-size:15px;color:#b9bccd;font-weight:400;letter-spacing:.6px">Editar Localização</div>
<div class="b" style="left:748.00px;top:94px;width:108.75px;height:146px;background:#2f3349;border-radius:14px"></div>
<div class="t" style="left:748.38px;width:108px;text-align:center;top:107.85px;font-size:15.3px;color:#b0b7dc;font-weight:400;">Qui</div>
<svg class="ic" style="left:779.38px;top:154px;width:46.0px;height:47.0px" viewBox="0 0 46 47">
<g fill="#ffffff"><circle cx="20" cy="9.8" r="9.8"/><circle cx="10.6" cy="22.4" r="10.6"/><circle cx="32.6" cy="20.2" r="12.8"/><rect x="10.6" y="14" width="22" height="19"/></g>
<g fill="#569ee9"><circle cx="20" cy="9.8" r="7.8"/><circle cx="10.6" cy="22.4" r="8.6"/><circle cx="32.6" cy="20.2" r="10.8"/><rect x="10.6" y="14" width="22" height="17"/></g>
<g fill="#8ec2ff"><circle cx="21.1" cy="38.9" r="2.2"/><circle cx="13" cy="44.6" r="2.2"/><circle cx="26.8" cy="45.5" r="2.2"/></g>
</svg>
<div class="t" style="left:748.38px;width:108px;text-align:center;top:218.26px;font-size:10.8px;color:#b0b7dc;font-weight:400;">7°C&nbsp;&nbsp;&nbsp;<span style="color:#ff9f43">12°C</span></div>
<div class="b" style="left:880.75px;top:94px;width:108.75px;height:146px;background:#2f3349;border-radius:14px"></div>
<div class="t" style="left:881.12px;width:108px;text-align:center;top:107.85px;font-size:15.3px;color:#b0b7dc;font-weight:400;">Sex</div>
<svg class="ic" style="left:912.12px;top:154px;width:46.0px;height:47.0px" viewBox="0 0 46 47">
<g fill="#ffffff"><circle cx="20" cy="9.8" r="9.8"/><circle cx="10.6" cy="22.4" r="10.6"/><circle cx="32.6" cy="20.2" r="12.8"/><rect x="10.6" y="14" width="22" height="19"/></g>
<g fill="#569ee9"><circle cx="20" cy="9.8" r="7.8"/><circle cx="10.6" cy="22.4" r="8.6"/><circle cx="32.6" cy="20.2" r="10.8"/><rect x="10.6" y="14" width="22" height="17"/></g>
<g fill="#8ec2ff"><circle cx="21.1" cy="38.9" r="2.2"/><circle cx="13" cy="44.6" r="2.2"/><circle cx="26.8" cy="45.5" r="2.2"/></g>
</svg>
<div class="t" style="left:881.12px;width:108px;text-align:center;top:218.26px;font-size:10.8px;color:#b0b7dc;font-weight:400;">7°C&nbsp;&nbsp;&nbsp;<span style="color:#ff9f43">9°C</span></div>
<div class="b" style="left:1013.50px;top:94px;width:108.75px;height:146px;background:#2f3349;border-radius:14px"></div>
<div class="t" style="left:1013.88px;width:108px;text-align:center;top:107.85px;font-size:15.3px;color:#b0b7dc;font-weight:400;">Sáb</div>
<svg class="ic" style="left:1033.38px;top:145px;width:60px;height:42px" viewBox="0 0 60 42">
<g stroke="#f9a50b" stroke-width="2.8" stroke-linecap="round"><line x1="12.70" y1="6.72" x2="10.91" y2="2.70"/><line x1="22.11" y1="6.64" x2="23.83" y2="2.59"/><line x1="6.34" y1="13.66" x2="2.18" y2="12.23"/><line x1="6.99" y1="22.86" x2="3.07" y2="24.85"/><line x1="13.85" y1="28.72" x2="12.49" y2="32.91"/></g>
<circle cx="17.5" cy="17.5" r="8.1" fill="#f9a50b"/>
<g transform="translate(4.1,-0.5)">
<g fill="#ffffff"><circle cx="30" cy="19.8" r="10"/><circle cx="20.8" cy="33" r="10.3"/><circle cx="43.5" cy="30" r="12.3"/><rect x="20.8" y="24" width="23" height="18.6"/></g>
<g fill="#90bef5"><circle cx="30" cy="19.8" r="8"/><circle cx="20.8" cy="33" r="8.3"/><circle cx="43.5" cy="30" r="10.3"/><rect x="20.8" y="24" width="23" height="16.6"/></g>
</g></svg>
<div class="t" style="left:1013.88px;width:108px;text-align:center;top:218.26px;font-size:10.8px;color:#b0b7dc;font-weight:400;">7°C&nbsp;&nbsp;&nbsp;<span style="color:#ff9f43">12°C</span></div>
<div class="b" style="left:1146.25px;top:94px;width:108.75px;height:146px;background:#2f3349;border-radius:14px"></div>
<div class="t" style="left:1146.62px;width:108px;text-align:center;top:107.85px;font-size:15.3px;color:#b0b7dc;font-weight:400;">Dom</div>
<svg class="ic" style="left:1180.62px;top:151px;width:40px;height:40px" viewBox="0 0 40 40">
<g stroke="#f9a50b" stroke-width="2.8" stroke-linecap="round"><line x1="15.10" y1="8.17" x2="14.03" y2="5.59"/><line x1="24.90" y1="8.17" x2="25.97" y2="5.59"/><line x1="31.83" y1="15.10" x2="34.41" y2="14.03"/><line x1="31.83" y1="24.90" x2="34.41" y2="25.97"/><line x1="24.90" y1="31.83" x2="25.97" y2="34.41"/><line x1="15.10" y1="31.83" x2="14.03" y2="34.41"/><line x1="8.17" y1="24.90" x2="5.59" y2="25.97"/><line x1="8.17" y1="15.10" x2="5.59" y2="14.03"/></g>
<circle cx="20" cy="20" r="8.6" fill="#f9a50b"/></svg>
<div class="t" style="left:1146.62px;width:108px;text-align:center;top:218.26px;font-size:10.8px;color:#b0b7dc;font-weight:400;">6°C&nbsp;&nbsp;&nbsp;<span style="color:#ff9f43">12°C</span></div>
<div class="b" style="left:1279.00px;top:94px;width:108.75px;height:146px;background:#2f3349;border-radius:14px"></div>
<div class="t" style="left:1279.38px;width:108px;text-align:center;top:107.85px;font-size:15.3px;color:#b0b7dc;font-weight:400;">Seg</div>
<svg class="ic" style="left:1310.38px;top:154px;width:46.0px;height:47.0px" viewBox="0 0 46 47">
<g fill="#ffffff"><circle cx="20" cy="9.8" r="9.8"/><circle cx="10.6" cy="22.4" r="10.6"/><circle cx="32.6" cy="20.2" r="12.8"/><rect x="10.6" y="14" width="22" height="19"/></g>
<g fill="#569ee9"><circle cx="20" cy="9.8" r="7.8"/><circle cx="10.6" cy="22.4" r="8.6"/><circle cx="32.6" cy="20.2" r="10.8"/><rect x="10.6" y="14" width="22" height="17"/></g>
<g fill="#8ec2ff"><circle cx="21.1" cy="38.9" r="2.2"/><circle cx="13" cy="44.6" r="2.2"/><circle cx="26.8" cy="45.5" r="2.2"/></g>
</svg>
<div class="t" style="left:1279.38px;width:108px;text-align:center;top:218.26px;font-size:10.8px;color:#b0b7dc;font-weight:400;">6°C&nbsp;&nbsp;&nbsp;<span style="color:#ff9f43">9°C</span></div>
<div class="b" style="left:1411.75px;top:94px;width:108.75px;height:146px;background:#2f3349;border-radius:14px"></div>
<div class="t" style="left:1412.12px;width:108px;text-align:center;top:107.85px;font-size:15.3px;color:#b0b7dc;font-weight:400;">Ter</div>
<svg class="ic" style="left:1443.12px;top:154px;width:46.0px;height:47.0px" viewBox="0 0 46 47">
<g fill="#ffffff"><circle cx="20" cy="9.8" r="9.8"/><circle cx="10.6" cy="22.4" r="10.6"/><circle cx="32.6" cy="20.2" r="12.8"/><rect x="10.6" y="14" width="22" height="19"/></g>
<g fill="#569ee9"><circle cx="20" cy="9.8" r="7.8"/><circle cx="10.6" cy="22.4" r="8.6"/><circle cx="32.6" cy="20.2" r="10.8"/><rect x="10.6" y="14" width="22" height="17"/></g>
<g fill="#8ec2ff"><circle cx="21.1" cy="38.9" r="2.2"/><circle cx="13" cy="44.6" r="2.2"/><circle cx="26.8" cy="45.5" r="2.2"/></g>
</svg>
<div class="t" style="left:1412.12px;width:108px;text-align:center;top:218.26px;font-size:10.8px;color:#b0b7dc;font-weight:400;">6°C&nbsp;&nbsp;&nbsp;<span style="color:#ff9f43">10°C</span></div>
<div class="b" style="left:1544.50px;top:94px;width:108.75px;height:146px;background:#2f3349;border-radius:14px"></div>
<div class="t" style="left:1544.88px;width:108px;text-align:center;top:107.85px;font-size:15.3px;color:#b0b7dc;font-weight:400;">Qua</div>
<svg class="ic" style="left:1564.38px;top:145px;width:60px;height:42px" viewBox="0 0 60 42">
<g stroke="#f9a50b" stroke-width="2.8" stroke-linecap="round"><line x1="12.70" y1="6.72" x2="10.91" y2="2.70"/><line x1="22.11" y1="6.64" x2="23.83" y2="2.59"/><line x1="6.34" y1="13.66" x2="2.18" y2="12.23"/><line x1="6.99" y1="22.86" x2="3.07" y2="24.85"/><line x1="13.85" y1="28.72" x2="12.49" y2="32.91"/></g>
<circle cx="17.5" cy="17.5" r="8.1" fill="#f9a50b"/>
<g transform="translate(4.1,-0.5)">
<g fill="#ffffff"><circle cx="30" cy="19.8" r="10"/><circle cx="20.8" cy="33" r="10.3"/><circle cx="43.5" cy="30" r="12.3"/><rect x="20.8" y="24" width="23" height="18.6"/></g>
<g fill="#90bef5"><circle cx="30" cy="19.8" r="8"/><circle cx="20.8" cy="33" r="8.3"/><circle cx="43.5" cy="30" r="10.3"/><rect x="20.8" y="24" width="23" height="16.6"/></g>
</g></svg>
<div class="t" style="left:1544.88px;width:108px;text-align:center;top:218.26px;font-size:10.8px;color:#b0b7dc;font-weight:400;">6°C&nbsp;&nbsp;&nbsp;<span style="color:#ff9f43">10°C</span></div>
<div class="b" style="left:1677.25px;top:94px;width:108.75px;height:146px;background:#2f3349;border-radius:14px"></div>
<div class="t" style="left:1677.62px;width:108px;text-align:center;top:107.85px;font-size:15.3px;color:#b0b7dc;font-weight:400;">Qui</div>
<svg class="ic" style="left:1697.12px;top:145px;width:60px;height:42px" viewBox="0 0 60 42">
<g stroke="#f9a50b" stroke-width="2.8" stroke-linecap="round"><line x1="12.70" y1="6.72" x2="10.91" y2="2.70"/><line x1="22.11" y1="6.64" x2="23.83" y2="2.59"/><line x1="6.34" y1="13.66" x2="2.18" y2="12.23"/><line x1="6.99" y1="22.86" x2="3.07" y2="24.85"/><line x1="13.85" y1="28.72" x2="12.49" y2="32.91"/></g>
<circle cx="17.5" cy="17.5" r="8.1" fill="#f9a50b"/>
<g transform="translate(4.1,-0.5)">
<g fill="#ffffff"><circle cx="30" cy="19.8" r="10"/><circle cx="20.8" cy="33" r="10.3"/><circle cx="43.5" cy="30" r="12.3"/><rect x="20.8" y="24" width="23" height="18.6"/></g>
<g fill="#90bef5"><circle cx="30" cy="19.8" r="8"/><circle cx="20.8" cy="33" r="8.3"/><circle cx="43.5" cy="30" r="10.3"/><rect x="20.8" y="24" width="23" height="16.6"/></g>
</g></svg>
<div class="t" style="left:1677.62px;width:108px;text-align:center;top:218.26px;font-size:10.8px;color:#b0b7dc;font-weight:400;">5°C&nbsp;&nbsp;&nbsp;<span style="color:#ff9f43">10°C</span></div>
<div class="b" style="left:748px;top:260px;width:195px;height:375px;background:#2f3349;border-radius:14px;"></div>
<div class="b" style="left:764px;top:300px;width:42px;height:42px;background:#274846;border-radius:50%"></div>
<svg class="ic" style="left:773px;top:309px;width:24px;height:24px" viewBox="0 0 24 24" fill="none" stroke="#08b534" stroke-width="1.5" stroke-linecap="round" stroke-linejoin="round" ><path d="M5 8h8.5a2.5 2.5 0 1 0 -2.34 -3.24"/><path d="M3 12h15.5a2.5 2.5 0 1 1 -2.34 3.24"/><path d="M4 16h5.5a2.5 2.5 0 1 1 -2.34 3.24"/></svg>
<div class="t" style="left:818.40px;top:279.40px;font-size:15px;color:#c9cdea;font-weight:400;letter-spacing:.3px;-webkit-text-stroke:.25px">Vento</div>
<div class="t" style="left:818.40px;top:302.51px;font-size:13.45px;color:#b0b7dc;font-weight:400;">Velocidade</div>
<div class="t" style="left:818.40px;top:325.01px;font-size:13.45px;color:#b0b7dc;font-weight:400;">e direção</div>
<div class="t" style="left:818.40px;top:347.51px;font-size:13.45px;color:#b0b7dc;font-weight:400;">do vento</div>
<svg class="ic" style="left:896px;top:311px;width:20px;height:20px" viewBox="0 0 24 24" fill="none" stroke="#08b534" stroke-width="1.5" stroke-linecap="round" stroke-linejoin="round" ><path d="M4 19l16 0"/><path d="M4 15l4 -6l4 2l4 -5l4 4"/></svg>
<div class="t" style="left:798.90px;top:520.37px;font-size:26.5px;color:#b3b8d9;font-weight:700;transform:scaleX(1.093);transform-origin:0 0">0.36</div>
<div class="t" style="left:862.50px;top:531.57px;font-size:13.5px;color:#b0b7dc;font-weight:400;">km/h</div>
<div class="t" style="left:755.50px;width:180px;text-align:center;top:559.04px;font-size:12.95px;color:#b0b7dc;font-weight:400;">Rajadas: 1.8km/h</div>
<svg class="ic" style="left:800px;top:586px;width:32px;height:26px" viewBox="0 0 32 26"><path d="M2.5 23.5 L16 2 L18.5 13 L28.5 22 Z" fill="none" stroke="#0fb83a" stroke-width="2.2" stroke-linejoin="round"/></svg>
<div class="t" style="left:837.10px;top:597.04px;font-size:13.3px;color:#b0b7dc;font-weight:400;">Sudoeste</div>
<div class="b" style="left:967px;top:260px;width:165px;height:375px;background:#2f3349;border-radius:14px;"></div>
<div class="b" style="left:983px;top:300px;width:42px;height:42px;background:#504448;border-radius:50%"></div>
<svg class="ic" style="left:992px;top:309px;width:24px;height:24px" viewBox="0 0 24 24" fill="none" stroke="#ff9f43" stroke-width="1.5" stroke-linecap="round" stroke-linejoin="round" ><path d="M12 12m-4 0a4 4 0 1 0 8 0a4 4 0 1 0 -8 0"/><path d="M3 12h1m8 -9v1m8 8h1m-9 8v1m-6.4 -15.4l.7 .7m12.1 -.7l-.7 .7m0 11.4l.7 .7m-12.1 -.7l-.7 .7"/></svg>
<div class="t" style="left:1037.40px;top:279.30px;font-size:15px;color:#c9cdea;font-weight:400;letter-spacing:.3px;-webkit-text-stroke:.25px">Índice UV</div>
<div class="t" style="left:1037.40px;top:302.81px;font-size:13.45px;color:#b0b7dc;font-weight:400;">Intensidade</div>
<div class="t" style="left:1037.40px;top:325.31px;font-size:13.45px;color:#b0b7dc;font-weight:400;">da radiação</div>
<div class="t" style="left:1037.40px;top:347.81px;font-size:13.45px;color:#b0b7dc;font-weight:400;">ultravioleta</div>
<svg class="ic" style="left:1026.5px;top:508.5px;width:45px;height:45px" viewBox="0 0 24 24" fill="none" stroke="#28c76f" stroke-width="1.5" stroke-linecap="round" stroke-linejoin="round" ><path d="M12 12m-4 0a4 4 0 1 0 8 0a4 4 0 1 0 -8 0"/><path d="M3 12h1m8 -9v1m8 8h1m-9 8v1m-6.4 -15.4l.7 .7m12.1 -.7l-.7 .7m0 11.4l.7 .7m-12.1 -.7l-.7 .7"/></svg>
<div class="t" style="left:849.50px;width:400px;text-align:center;top:564.79px;font-size:26px;color:#28c76f;font-weight:700;">0</div>
<div class="t" style="left:849.50px;width:400px;text-align:center;top:602.34px;font-size:13.3px;color:#b0b7dc;font-weight:400;">Baixa</div>
<div class="b" style="left:1156px;top:260px;width:200px;height:375px;background:#2f3349;border-radius:14px;"></div>
<div class="b" style="left:1172px;top:300px;width:42px;height:42px;background:#274c62;border-radius:50%"></div>
<svg class="ic" style="left:1181px;top:309px;width:24px;height:24px" viewBox="0 0 24 24" fill="none" stroke="#00cfe8" stroke-width="1.5" stroke-linecap="round" stroke-linejoin="round" ><path d="M7.502 19.423c2.602 2.105 6.395 2.105 8.996 0c2.602 -2.105 3.262 -5.708 1.566 -8.546l-4.89 -7.26c-.42 -.625 -1.287 -.803 -1.936 -.397a1.376 1.376 0 0 0 -.41 .397l-4.893 7.26c-1.695 2.838 -1.035 6.441 1.567 8.546z"/></svg>
<div class="t" style="left:1226.40px;top:279.30px;font-size:15px;color:#c9cdea;font-weight:400;letter-spacing:.3px;-webkit-text-stroke:.25px">Humidade</div>
<div class="t" style="left:1226.40px;top:302.81px;font-size:13.45px;color:#b0b7dc;font-weight:400;">Humidade</div>
<div class="t" style="left:1226.40px;top:325.31px;font-size:13.45px;color:#b0b7dc;font-weight:400;">relativa do</div>
<div class="t" style="left:1226.40px;top:347.81px;font-size:13.45px;color:#b0b7dc;font-weight:400;">ar</div>
<svg class="ic" style="left:1309px;top:311px;width:20px;height:20px" viewBox="0 0 24 24" fill="none" stroke="#08b534" stroke-width="1.5" stroke-linecap="round" stroke-linejoin="round" ><path d="M4 19l16 0"/><path d="M4 15l4 -6l4 2l4 -5l4 4"/></svg>
<svg class="ic" style="left:1237px;top:492px;width:38px;height:38px" viewBox="0 0 24 24" fill="none" stroke="#ea5455" stroke-width="1.5" stroke-linecap="round" stroke-linejoin="round" ><path d="M7.502 19.423c2.602 2.105 6.395 2.105 8.996 0c2.602 -2.105 3.262 -5.708 1.566 -8.546l-4.89 -7.26c-.42 -.625 -1.287 -.803 -1.936 -.397a1.376 1.376 0 0 0 -.41 .397l-4.893 7.26c-1.695 2.838 -1.035 6.441 1.567 8.546z"/><path d="M5 13h14"/></svg>
<div class="t" style="left:1231.00px;top:544.37px;font-size:26.5px;color:#ea5455;font-weight:700;transform:scaleX(1.125);transform-origin:0 0">95</div>
<div class="t" style="left:1270.60px;top:555.57px;font-size:13.5px;color:#b0b7dc;font-weight:400;">%</div>
<div class="t" style="left:1172.50px;top:582.74px;font-size:13.3px;color:#b0b7dc;font-weight:400;">Muito Alta (Risco de</div>
<div class="t" style="left:1172.50px;top:602.44px;font-size:13.3px;color:#b0b7dc;font-weight:400;">Doenças)</div>
<div class="b" style="left:1380px;top:260px;width:216px;height:375px;background:#2f3349;border-radius:14px;"></div>
<div class="b" style="left:1396px;top:310px;width:42px;height:42px;background:#2e4b4f;border-radius:50%"></div>
<svg class="ic" style="left:1405px;top:319px;width:24px;height:24px" viewBox="0 0 24 24" fill="none" stroke="#28c76f" stroke-width="1.5" stroke-linecap="round" stroke-linejoin="round" ><path d="M12 12m-4 0a4 4 0 1 0 8 0a4 4 0 1 0 -8 0"/><path d="M3 12h1m8 -9v1m8 8h1m-9 8v1m-6.4 -15.4l.7 .7m12.1 -.7l-.7 .7m0 11.4l.7 .7m-12.1 -.7l-.7 .7"/></svg>
<div class="t" style="left:1450.40px;top:279.20px;font-size:15px;color:#c9cdea;font-weight:400;letter-spacing:.3px;-webkit-text-stroke:.25px">Evapotranspiração</div>
<div class="t" style="left:1450.40px;top:300.20px;font-size:15px;color:#c9cdea;font-weight:400;letter-spacing:.3px;-webkit-text-stroke:.25px">(ET<span style="font-size:8.5px;vertical-align:-2.5px">0</span>)</div>
<div class="t" style="left:1450.40px;top:323.11px;font-size:13.45px;color:#b0b7dc;font-weight:400;">Taxa de perda de</div>
<div class="t" style="left:1450.40px;top:345.61px;font-size:13.45px;color:#b0b7dc;font-weight:400;">água de referência</div>
<div class="t" style="left:1450.40px;top:368.11px;font-size:13.45px;color:#b0b7dc;font-weight:400;">da cultura</div>
<svg class="ic" style="left:1464px;top:493px;width:48px;height:48px" viewBox="0 0 24 24" fill="none" stroke="#28c76f" stroke-width="1.5" stroke-linecap="round" stroke-linejoin="round" ><path d="M12 12m-4 0a4 4 0 1 0 8 0a4 4 0 1 0 -8 0"/><path d="M3 12h1m8 -9v1m8 8h1m-9 8v1m-6.4 -15.4l.7 .7m12.1 -.7l-.7 .7m0 11.4l.7 .7m-12.1 -.7l-.7 .7"/></svg>
<div class="t" style="left:1447.80px;top:548.63px;font-size:23px;color:#28c76f;font-weight:700;letter-spacing:-.4px">2.7</div>
<div class="t" style="left:1484.80px;top:556.67px;font-size:13.5px;color:#b0b7dc;font-weight:400;">mm/dia</div>
<div class="t" style="left:1397.00px;top:582.74px;font-size:13.3px;color:#b0b7dc;font-weight:400;">Moderada (Evaporação</div>
<div class="t" style="left:1397.00px;top:602.44px;font-size:13.3px;color:#b0b7dc;font-weight:400;">Normal)</div>
<div class="b" style="left:1620px;top:260px;width:166px;height:375px;background:#2f3349;border-radius:14px;"></div>
<div class="b" style="left:1636px;top:344px;width:42px;height:42px;background:#274846;border-radius:50%"></div>
<svg class="ic" style="left:1645px;top:353px;width:24px;height:24px" viewBox="0 0 24 24" fill="none" stroke="#08b534" stroke-width="1.5" stroke-linecap="round" stroke-linejoin="round" ><path d="M10 13.5a4 4 0 1 0 4 0v-8.5a2 2 0 0 0 -4 0v8.5"/><path d="M10 9l4 0"/></svg>
<div class="t" style="left:1690.40px;top:279.70px;font-size:15px;color:#c9cdea;font-weight:400;letter-spacing:.3px;-webkit-text-stroke:.25px">Índice de</div>
<div class="t" style="left:1690.40px;top:300.70px;font-size:15px;color:#c9cdea;font-weight:400;letter-spacing:.3px;-webkit-text-stroke:.25px">Winkler</div>
<div class="t" style="left:1690.40px;top:323.21px;font-size:13.45px;color:#b0b7dc;font-weight:400;">Soma</div>
<div class="t" style="left:1690.40px;top:345.71px;font-size:13.45px;color:#b0b7dc;font-weight:400;">acumulada</div>
<div class="t" style="left:1690.40px;top:368.21px;font-size:13.45px;color:#b0b7dc;font-weight:400;">de graus-dia</div>
<div class="t" style="left:1690.40px;top:390.71px;font-size:13.45px;color:#b0b7dc;font-weight:400;">de</div>
<div class="t" style="left:1690.40px;top:413.21px;font-size:13.45px;color:#b0b7dc;font-weight:400;">crescimento</div>
<div class="t" style="left:1690.40px;top:435.71px;font-size:13.45px;color:#b0b7dc;font-weight:400;">(base 10°C)</div>
<svg class="ic" style="left:1683px;top:476px;width:40px;height:40px" viewBox="0 0 24 24" fill="none" stroke="#ea5455" stroke-width="1.5" stroke-linecap="round" stroke-linejoin="round" ><path d="M10 13.5a4 4 0 1 0 4 0v-8.5a2 2 0 0 0 -4 0v8.5"/><path d="M10 9l4 0"/></svg>
<div class="t" style="left:1658.90px;top:528.73px;font-size:23px;color:#ea5455;font-weight:700;transform:scaleX(1.096);transform-origin:0 0">2050</div>
<div class="t" style="left:1720.80px;top:537.67px;font-size:12.2px;color:#b0b7dc;font-weight:400;">GGD</div>
<div class="t" style="left:1636.75px;top:563.14px;font-size:13.3px;color:#b0b7dc;font-weight:400;">Muito Quente (Vinhos</div>
<div class="t" style="left:1636.75px;top:582.74px;font-size:13.3px;color:#b0b7dc;font-weight:400;">de mesa ou de</div>
<div class="t" style="left:1636.75px;top:602.34px;font-size:13.3px;color:#b0b7dc;font-weight:400;">sobremesa)</div>
<div class="b" style="left:748px;top:659px;width:1038px;height:202px;background:#2f3349;border-radius:14px;"></div>
<div class="b" style="left:764px;top:676px;width:42px;height:42px;background:#274846;border-radius:50%"></div>
<svg class="ic" style="left:773px;top:685px;width:24px;height:24px" viewBox="0 0 24 24" fill="none" stroke="#08b534" stroke-width="1.5" stroke-linecap="round" stroke-linejoin="round" ><path d="M12 12m-4 0a4 4 0 1 0 8 0a4 4 0 1 0 -8 0"/><path d="M3 12h1m8 -9v1m8 8h1m-9 8v1m-6.4 -15.4l.7 .7m12.1 -.7l-.7 .7m0 11.4l.7 .7m-12.1 -.7l-.7 .7"/></svg>
<div class="t" style="left:818.40px;top:677.79px;font-size:15.6px;color:#c9cdea;font-weight:400;">Huglin Index</div>
<div class="t" style="left:818.40px;top:701.61px;font-size:13.46px;color:#b0b7dc;font-weight:400;">Exposição cumulativa ao calor e à luz solar (potencial bioclimático)</div>
<svg class="ic" style="left:1244.5px;top:740.5px;width:45px;height:45px" viewBox="0 0 24 24" fill="none" stroke="#ea5455" stroke-width="1.5" stroke-linecap="round" stroke-linejoin="round" ><path d="M12 12m-4 0a4 4 0 1 0 8 0a4 4 0 1 0 -8 0"/><path d="M3 12h1m8 -9v1m8 8h1m-9 8v1m-6.4 -15.4l.7 .7m12.1 -.7l-.7 .7m0 11.4l.7 .7m-12.1 -.7l-.7 .7"/></svg>
<div class="t" style="left:1230.30px;top:794.61px;font-size:23.5px;color:#ea5455;font-weight:700;transform:scaleX(1.065);transform-origin:0 0">2776</div>
<div class="t" style="left:1291.00px;top:803.74px;font-size:13.3px;color:#b0b7dc;font-weight:400;">IH</div>
<div class="t" style="left:1067.00px;width:400px;text-align:center;top:827.98px;font-size:13.49px;color:#b0b7dc;font-weight:400;">Muito Quente (Alto potencial de açúcar)</div>
<div class="b" style="left:748px;top:885px;width:1038px;height:86px;background:#2f3349;border-radius:14px;"></div>
<div class="t" style="left:772.50px;top:918.88px;font-size:18.1px;color:#c9cdea;font-weight:400;">Todos os canais</div>
<svg class="ic" style="left:1732.5px;top:917.5px;width:21px;height:21px" viewBox="0 0 24 24" fill="none" stroke="#b0b7dc" stroke-width="1.5" stroke-linecap="round" stroke-linejoin="round" ><path d="M6 9l6 6l6 -6"/></svg>
<div class="b" style="left:748px;top:995px;width:1038px;height:120px;background:#2f3349;border-radius:14px;"></div>
<div class="t" style="left:764.60px;top:1012.92px;font-size:19px;color:#c9cdea;font-weight:400;">Fotografias</div>
<div class="t" style="left:764.60px;top:1044.24px;font-size:14.6px;color:#b0b7dc;font-weight:400;">Registos visuais captados no local</div>
<div class="b" style="left:1728px;top:1011px;width:42px;height:42px;background:#274846;border-radius:50%"></div>
<svg class="ic" style="left:1739px;top:1022px;width:20px;height:20px" viewBox="0 0 24 24" fill="none" stroke="#08b534" stroke-width="1.5" stroke-linecap="round" stroke-linejoin="round" ><path d="M12 20h-7a2 2 0 0 1 -2 -2v-9a2 2 0 0 1 2 -2h1a2 2 0 0 0 2 -2a1 1 0 0 1 1 -1h6a1 1 0 0 1 1 1a2 2 0 0 0 2 2h1a2 2 0 0 1 2 2v3.5"/><path d="M16 19h6"/><path d="M19 16v6"/><path d="M9 13a3 3 0 1 0 6 0a3 3 0 0 0 -6 0"/></svg>
<div class="b" style="left:765px;top:1076px;width:220px;height:10px;border-radius:6px;background:linear-gradient(90deg,#d9dde3,#c9d3e0 50%,#dfe4ea)"></div>
<div class="b" style="left:1915px;top:12px;width:2.2px;height:602px;background:#a3a3a6"></div>
</body></html>
